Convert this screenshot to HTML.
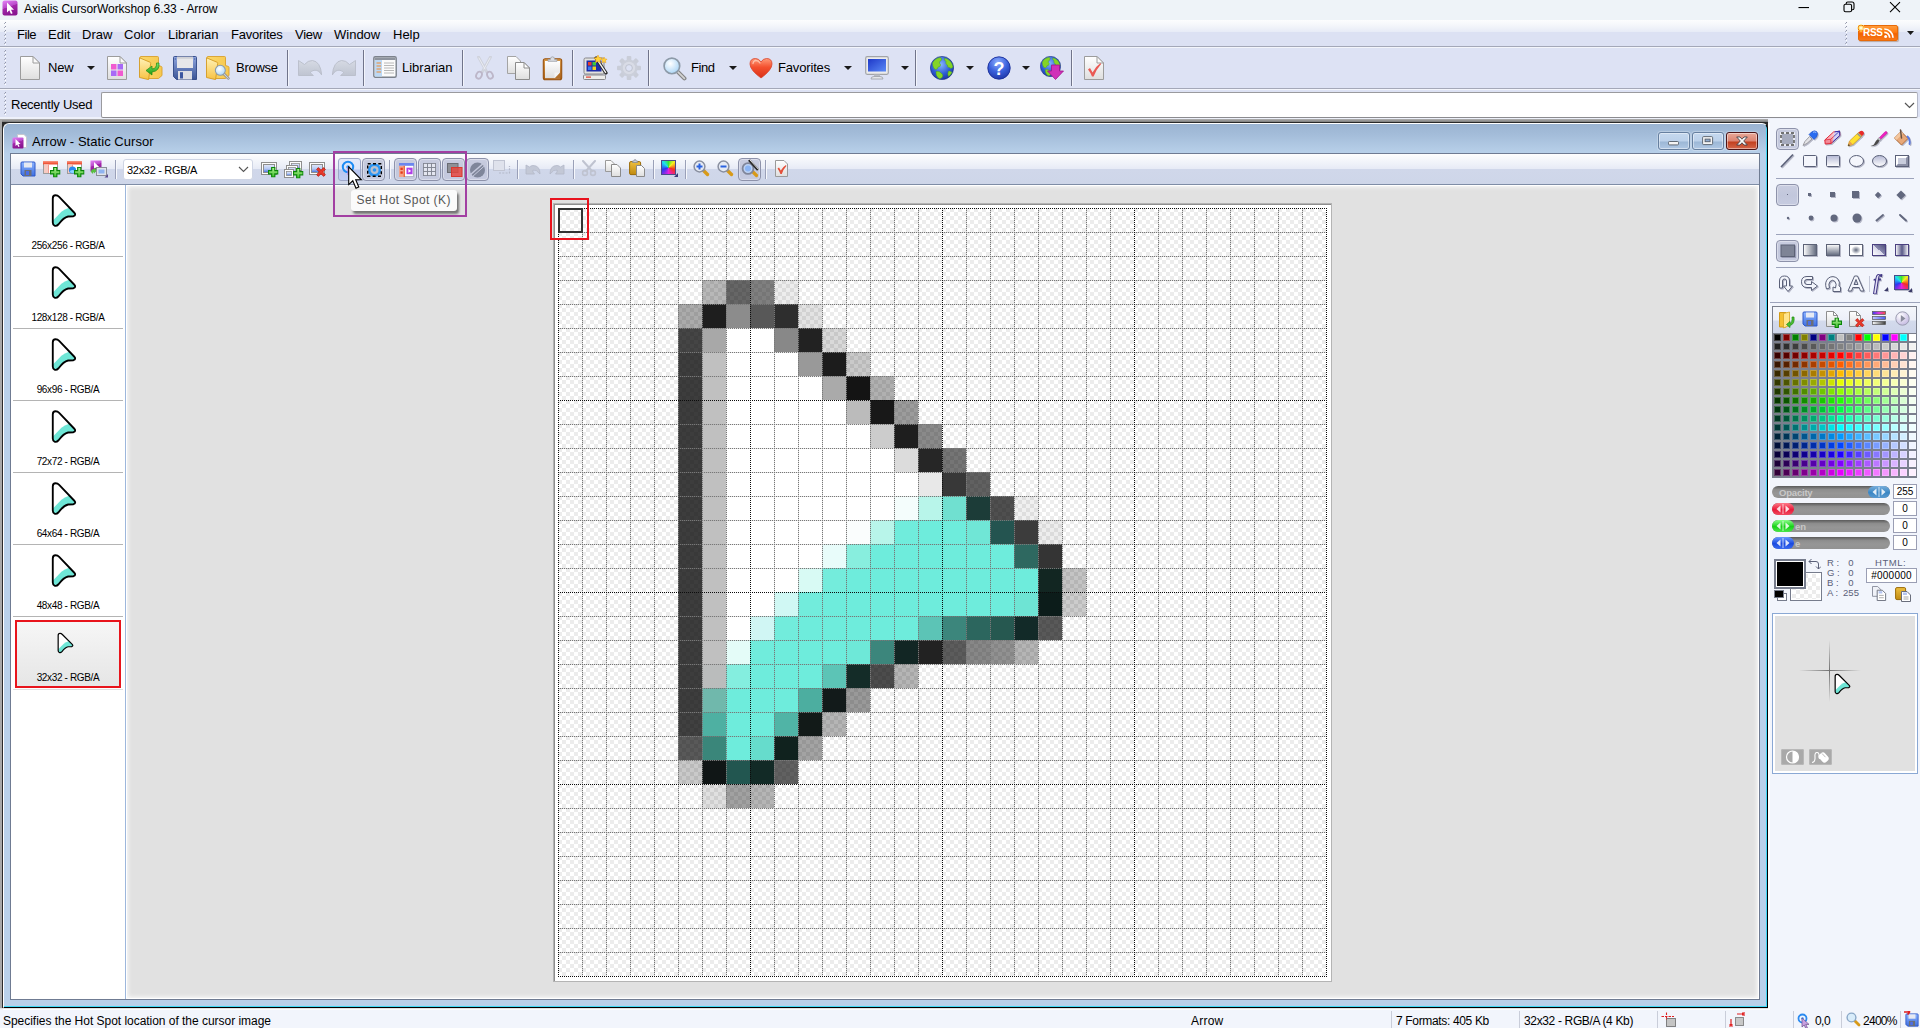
<!DOCTYPE html><html><head><meta charset="utf-8"><title>Axialis CursorWorkshop 6.33 - Arrow</title>
<style>
html,body{margin:0;padding:0}
body{width:1920px;height:1028px;position:relative;overflow:hidden;background:#eef1fa;
 font-family:"Liberation Sans",sans-serif;font-size:12px;color:#000}
div,span.t,svg{position:absolute;box-sizing:border-box}
span.t{white-space:nowrap;line-height:16px;display:block}
.sep{width:1px;background:#70748a}
.sep:after{content:"";position:absolute;left:1px;top:0;width:1px;height:100%;background:#f2f4fb}
.tb{border:1px solid #8d92aa;border-radius:4px;background:linear-gradient(#c9cde0,#c2c7dc 50%,#c6cbe0);box-shadow:inset 0 0 0 1px rgba(255,255,255,.35)}
.vb{border:1px solid #9a9eb4;background:#fff;font-size:10px;text-align:center;line-height:13px;color:#000}
.sl{border-radius:6px;background:linear-gradient(#5a5a5a,#8e8e8e 30%,#969696 60%,#929292);height:12px}
.hd{border-radius:6px;height:12px;width:22px}
</style></head><body>
<svg width="0" height="0" style="left:0;top:0"><defs>
<linearGradient id="gpage" x1="0" y1="0" x2="0" y2="1"><stop offset="0" stop-color="#ffffff"/><stop offset="1" stop-color="#dedede"/></linearGradient>
<linearGradient id="gfold" x1="0" y1="0" x2="0" y2="1"><stop offset="0" stop-color="#fff2b8"/><stop offset="1" stop-color="#f7c243"/></linearGradient>
<linearGradient id="gfold2" x1="0" y1="0" x2="1" y2="0"><stop offset="0" stop-color="#fcd868"/><stop offset="1" stop-color="#f6c850"/></linearGradient>
<linearGradient id="gflop" x1="0" y1="0" x2="0" y2="1"><stop offset="0" stop-color="#8ea4de"/><stop offset="1" stop-color="#3a5496"/></linearGradient>
<linearGradient id="gflop2" x1="0" y1="0" x2="0" y2="1"><stop offset="0" stop-color="#8db4ff"/><stop offset="1" stop-color="#3f6fe0"/></linearGradient>
<linearGradient id="ggray" x1="0" y1="0" x2="0" y2="1"><stop offset="0" stop-color="#d6dae4"/><stop offset="1" stop-color="#bfc4d1"/></linearGradient>
<linearGradient id="ggrn" x1="0" y1="0" x2="0" y2="1"><stop offset="0" stop-color="#7be36a"/><stop offset="1" stop-color="#1c9a10"/></linearGradient>
<radialGradient id="glens" cx=".4" cy=".35" r=".7"><stop offset="0" stop-color="#ffffff"/><stop offset="1" stop-color="#a8d4f6"/></radialGradient>
<radialGradient id="gglobe" cx=".45" cy=".35" r=".75"><stop offset="0" stop-color="#86b6ff"/><stop offset=".55" stop-color="#2f5cd4"/><stop offset="1" stop-color="#162a92"/></radialGradient>
<radialGradient id="ghelp" cx=".45" cy=".25" r=".85"><stop offset="0" stop-color="#8fb0ff"/><stop offset=".5" stop-color="#3a60dc"/><stop offset="1" stop-color="#1a2e9c"/></radialGradient>
<linearGradient id="gheart" x1="0" y1="0" x2="0" y2="1"><stop offset="0" stop-color="#ff9a78"/><stop offset=".45" stop-color="#f4502e"/><stop offset="1" stop-color="#d83018"/></linearGradient>
<linearGradient id="gmon" x1="0" y1="0" x2="1" y2="1"><stop offset="0" stop-color="#1e38c8"/><stop offset="1" stop-color="#5b8af6"/></linearGradient>
<linearGradient id="gclip" x1="0" y1="0" x2="0" y2="1"><stop offset="0" stop-color="#d89a4a"/><stop offset="1" stop-color="#a85e14"/></linearGradient>
<linearGradient id="gclip2" x1="0" y1="0" x2="0" y2="1"><stop offset="0" stop-color="#eec040"/><stop offset="1" stop-color="#c08a10"/></linearGradient>
<linearGradient id="gtool" x1="0" y1="0" x2="0" y2="1"><stop offset="0" stop-color="#ffffff"/><stop offset="1" stop-color="#b4b8d4"/></linearGradient>
<linearGradient id="ggrh" x1="0" y1="0" x2="1" y2="0"><stop offset="0" stop-color="#ffffff"/><stop offset="1" stop-color="#60687c"/></linearGradient>
<linearGradient id="ggrv" x1="0" y1="0" x2="0" y2="1"><stop offset="0" stop-color="#ffffff"/><stop offset="1" stop-color="#60687c"/></linearGradient>
<radialGradient id="ggrr"><stop offset="0" stop-color="#60687c"/><stop offset=".75" stop-color="#ffffff"/></radialGradient>
<linearGradient id="ggrd" x1="1" y1="0" x2="0" y2="1"><stop offset="0" stop-color="#4a4a78"/><stop offset=".5" stop-color="#8a8ab0"/><stop offset=".5" stop-color="#d8d8ea"/><stop offset="1" stop-color="#ffffff"/></linearGradient>
<linearGradient id="ggrm" x1="0" y1="0" x2="1" y2="0"><stop offset="0" stop-color="#ffffff"/><stop offset=".5" stop-color="#5a5a88"/><stop offset="1" stop-color="#ffffff"/></linearGradient>
<linearGradient id="gplus" x1="0" y1="0" x2="0" y2="1"><stop offset="0" stop-color="#b6f29a"/><stop offset="1" stop-color="#3fc028"/></linearGradient>
<linearGradient id="gpurp" x1="0" y1="0" x2=".35" y2="1"><stop offset="0" stop-color="#e686f8"/><stop offset=".5" stop-color="#b848c8"/><stop offset=".52" stop-color="#a428ac"/><stop offset="1" stop-color="#8a1690"/></linearGradient>
<linearGradient id="gred" x1="0" y1="0" x2="0" y2="1"><stop offset="0" stop-color="#f4705c"/><stop offset="1" stop-color="#e03820"/></linearGradient>
<symbol id="arw" viewBox="4.5 2.5 17.5 22.5" overflow="visible" preserveAspectRatio="none">
<clipPath id="arwc"><path d="M5.7,6 Q5.7,4 7.6,4 Q9,4 10,5 L20.2,15.2 Q21.6,16.6 19.6,17.4 L16,17.6 Q13,18.2 9.6,22.6 Q8.2,24 6.9,23.5 Q5.7,23 5.7,21.5 Z"/></clipPath>
<path d="M5.7,6 Q5.7,4 7.6,4 Q9,4 10,5 L20.2,15.2 Q21.6,16.6 19.6,17.4 L16,17.6 Q13,18.2 9.6,22.6 Q8.2,24 6.9,23.5 Q5.7,23 5.7,21.5 Z" fill="#fff"/>
<path clip-path="url(#arwc)" d="M5,21 L11.5,14.5 Q13.5,13 17,11.8 L24,11.8 V26 H4 Z" fill="#6ee6d6"/>
<path d="M5.7,6 Q5.7,4 7.6,4 Q9,4 10,5 L20.2,15.2 Q21.6,16.6 19.6,17.4 L16,17.6 Q13,18.2 9.6,22.6 Q8.2,24 6.9,23.5 Q5.7,23 5.7,21.5 Z" fill="none" stroke="#000" stroke-width="1.25" stroke-linejoin="round"/>
</symbol>
<symbol id="plus" viewBox="0 0 10 10"><path d="M3.5,.5 H6.5 V3.5 H9.5 V6.5 H6.5 V9.5 H3.5 V6.5 H.5 V3.5 H3.5 Z" fill="url(#gplus)" stroke="#0a8608" stroke-width="1.100"/></symbol>
<symbol id="xred" viewBox="0 0 10 10"><path d="M1,2.6 L2.6,1 L5,3.4 L7.4,1 L9,2.6 L6.6,5 L9,7.4 L7.4,9 L5,6.6 L2.6,9 L1,7.4 L3.4,5 Z" fill="#e8382a" stroke="#b81a10" stroke-width=".7"/></symbol>
<symbol id="floppy" viewBox="0 0 24 24"><path d="M.5,1.500 Q.5,.5 1.500,.5 H22.500 Q23.500,.5 23.500,1.500 V23.500 H3.500 L.5,20.500 Z" fill="url(#gflop)" stroke="#2f4684" stroke-width=".9"/><rect x="4" y=".8" width="16" height="11.200" fill="#e7e7ea"/><rect x="4" y=".8" width="16" height="2" fill="#cfd0d6"/><rect x="5" y="15" width="14" height="8.500" fill="#dcdde4"/><rect x="7" y="16.200" width="3" height="6.300" fill="#3a55a0"/><rect x="1.800" y="2.500" width="1" height="1" fill="#2f4684"/><rect x="21.200" y="2.500" width="1" height="1" fill="#2f4684"/></symbol>
<symbol id="floppyb" viewBox="0 0 16 16"><path d="M1,2 Q1,1 2,1 H14 Q15,1 15,2 V15 H3 L1,13 Z" fill="url(#gflop2)" stroke="#2f58c8" stroke-width="1"/><rect x="4" y="1.5" width="8" height="5" fill="#e6e9f2"/><rect x="4.5" y="9" width="7" height="6" fill="#6a6e78"/><rect x="6" y="10" width="3" height="4" fill="#4a6ee8"/></symbol>
<symbol id="page" viewBox="0 0 20 24"><path d="M.5,.5 H13 L19.5,7 V23.5 H.5 Z" fill="url(#gpage)" stroke="#9c9c9c"/><path d="M13,.5 V7 H19.5 Z" fill="#fafafa" stroke="#9c9c9c" stroke-linejoin="round"/></symbol>
<symbol id="spage" viewBox="0 0 16 16"><path d="M2.5,.5 H9.5 L13.5,4.5 V15.5 H2.5 Z" fill="url(#gpage)" stroke="#8e8e8e"/><path d="M9.5,.5 V4.5 H13.5 Z" fill="#fff" stroke="#8e8e8e" stroke-linejoin="round"/></symbol>
<symbol id="folder" viewBox="0 0 24 24"><path d="M1,1.5 Q1,.5 2,.5 H18.500 Q19.500,.5 19.500,1.500 V9.500 L22.500,10.500 Q23,10.800 23,11.500 V19.500 L19.500,22.500 H9 Z" fill="url(#gfold2)" stroke="#d9a02c" stroke-width=".9"/><path d="M.5,1.800 L11.200,6.300 Q11.800,6.600 11.700,7.300 L9.600,23.600 L.5,21.500 Z" fill="url(#gfold)" stroke="#d49a20" stroke-width=".9"/></symbol>
<symbol id="lens" viewBox="0 0 24 24"><path d="M15,15 L21.500,21.500" stroke="#868686" stroke-width="4" stroke-linecap="round"/><path d="M15,15 L21.500,21.500" stroke="#d4d4d4" stroke-width="1.600" stroke-linecap="round"/><circle cx="9.5" cy="9.5" r="7.5" fill="url(#glens)" stroke="#8d9aa8" stroke-width="1.6"/></symbol>
<symbol id="globe" viewBox="0 0 24 24"><circle cx="12" cy="12" r="11.600" fill="url(#gglobe)" stroke="#1a2c7a" stroke-width=".6"/><path d="M2.500,7 Q5,2 10.500,1.500 Q12.500,3 11,4.800 Q9,5.200 9.500,7.200 Q11.500,8.500 10,10.500 Q7.500,10.500 7.500,12.500 Q6,14.500 4,12.500 Q2.500,10 2.500,7Z M6,15.500 Q9.500,14.500 11,17 Q13.500,18.500 12.500,21 Q11,23 9,22.600 Q5.500,20 6,15.500Z M14.500,2 Q18,2.500 20.500,5.500 Q22.500,8 23,11 Q21,13.500 19.500,11.500 Q17,11.500 17.500,9 Q15,8 16,5.500 Q14,4.500 14.500,2Z M18.500,15 Q21,14.500 22,16.500 Q20.500,19.500 18.500,20.500 Q17,18 18.500,15Z" fill="#84d426" stroke="#3f9a14" stroke-width=".4"/></symbol>
</defs></svg>
<div style="left:0px;top:0px;width:1920px;height:20px;background:#eef3f8"></div>
<svg style="left:2px;top:0px" width="16" height="16" viewBox="0 0 16 16" ><rect x=".5" y=".5" width="15" height="15" rx="2" fill="url(#gpurp)"/><path d="M5,2.5 V12.5 L7.3,10.3 L9,14 L10.6,13.3 L9,9.7 H12 Z" fill="#fff"/></svg>
<span class="t" style="left:24px;top:1px;font-size:12px;color:#000;letter-spacing:-0.07px;line-height:17px">Axialis CursorWorkshop 6.33 - Arrow</span>
<svg style="left:1798px;top:7px" width="12" height="2" viewBox="0 0 12 2" ><rect x="0.5" y="0" width="10.5" height="1.1" fill="#000"/></svg><svg style="left:1843px;top:1px" width="12" height="12" viewBox="0 0 12 12" ><rect x="1" y="3.2" width="7.6" height="7.6" rx="1.6" fill="none" stroke="#000" stroke-width="1.1"/><path d="M3.2,3 V2.6 Q3.2,1 4.8,1 H9 Q11,1 11,3 V7.2 Q11,8.8 9.4,8.8 H9" fill="none" stroke="#000" stroke-width="1.1"/></svg><svg style="left:1889px;top:1px" width="12" height="12" viewBox="0 0 12 12" ><path d="M1,1.2 L11,11.2 M11,1.2 L1,11.2" stroke="#000" stroke-width="1.1" fill="none"/></svg>
<div style="left:0px;top:20px;width:1920px;height:27px;background:linear-gradient(#fcfdfe 0,#f5f7fb 5px,#e8ecf7 11.5px,#dce1f3 12px,#dce1f3 100%)"></div>
<div style="left:0px;top:46px;width:1920px;height:1px;background:#a4a8b8"></div>
<div style="left:0px;top:47px;width:1920px;height:1px;background:#f3f5fb"></div>
<div style="left:5px;top:22px;width:1px;height:24px;background:repeating-linear-gradient(#8f93a6 0,#8f93a6 1px,transparent 1px,transparent 4px)"></div><div style="left:4px;top:23px;width:1px;height:24px;background:repeating-linear-gradient(#a9adbd 0,#a9adbd 1px,transparent 1px,transparent 4px)"></div><div style="left:5px;top:24px;width:1px;height:24px;background:repeating-linear-gradient(#fff 0,#fff 1px,transparent 1px,transparent 4px)"></div>
<span class="t" style="left:17px;top:27px;font-size:13px;color:#000;letter-spacing:-0.45px">File</span>
<span class="t" style="left:48px;top:27px;font-size:13px;color:#000;letter-spacing:0px">Edit</span>
<span class="t" style="left:82px;top:27px;font-size:13px;color:#000;letter-spacing:0px">Draw</span>
<span class="t" style="left:124px;top:27px;font-size:13px;color:#000;letter-spacing:0px">Color</span>
<span class="t" style="left:168px;top:27px;font-size:13px;color:#000;letter-spacing:0px">Librarian</span>
<span class="t" style="left:231px;top:27px;font-size:13px;color:#000;letter-spacing:-0.2px">Favorites</span>
<span class="t" style="left:295px;top:27px;font-size:13px;color:#000;letter-spacing:-0.3px">View</span>
<span class="t" style="left:334px;top:27px;font-size:13px;color:#000;letter-spacing:0px">Window</span>
<span class="t" style="left:393px;top:27px;font-size:13px;color:#000;letter-spacing:0px">Help</span>
<div style="left:1846px;top:22px;width:1px;height:24px;background:repeating-linear-gradient(#8f93a6 0,#8f93a6 1px,transparent 1px,transparent 4px)"></div><div style="left:1845px;top:23px;width:1px;height:24px;background:repeating-linear-gradient(#a9adbd 0,#a9adbd 1px,transparent 1px,transparent 4px)"></div><div style="left:1846px;top:24px;width:1px;height:24px;background:repeating-linear-gradient(#fff 0,#fff 1px,transparent 1px,transparent 4px)"></div>
<div style="left:1858px;top:25px;width:40px;height:16px;border-radius:2px;border:1px solid #e86a08;background:linear-gradient(#ff9a3a,#ff7a10 45%,#f26200 55%,#f87818);box-shadow:1px 1px 1px rgba(120,60,0,.35)"><span class="t" style="left:4px;top:0;font-size:10px;font-weight:bold;color:#fff;line-height:14px;letter-spacing:-.3px">RSS</span></div><svg style="left:1884px;top:28px" width="10" height="10" viewBox="0 0 10 10" ><circle cx="1.6" cy="8.4" r="1.5" fill="#fff"/><path d="M0.3,4.3 A5.4,5.4 0 0 1 5.7,9.7" fill="none" stroke="#fff" stroke-width="1.7"/><path d="M0.3,1 A8.7,8.7 0 0 1 9,9.7" fill="none" stroke="#fff" stroke-width="1.7"/></svg><svg style="left:1856.5px;top:24px" width="8" height="8" viewBox="0 0 9 9" ><path d="M4.5,0 V9 M0,4.5 H9 M1.3,1.3 L7.7,7.7 M7.7,1.3 L1.3,7.7" stroke="#ffe45a" stroke-width="1.1"/><circle cx="4.5" cy="4.5" r="2" fill="#fffbd0"/></svg>
<svg style="left:1907px;top:31px" width="7" height="4" viewBox="0 0 7 4" ><path d="M0,0 H7 L3.5,4 Z" fill="#1a1a1a"/></svg>
<div style="left:0px;top:48px;width:1920px;height:40px;background:#dde2f4"></div>
<div style="left:0px;top:88px;width:1920px;height:1px;background:#a4a8b8"></div>
<div style="left:0px;top:89px;width:1920px;height:1px;background:#f3f5fb"></div>
<div style="left:5px;top:50px;width:1px;height:36px;background:repeating-linear-gradient(#8f93a6 0,#8f93a6 1px,transparent 1px,transparent 4px)"></div><div style="left:4px;top:51px;width:1px;height:36px;background:repeating-linear-gradient(#a9adbd 0,#a9adbd 1px,transparent 1px,transparent 4px)"></div><div style="left:5px;top:52px;width:1px;height:36px;background:repeating-linear-gradient(#fff 0,#fff 1px,transparent 1px,transparent 4px)"></div>
<svg style="left:20px;top:56px" width="20" height="24" viewBox="0 0 20 24" ><use href="#page" width="20" height="24"/></svg><span class="t" style="left:48px;top:60px;font-size:13px;color:#000;letter-spacing:-0.24px">New</span><svg style="left:87px;top:66px" width="8" height="4" viewBox="0 0 8 4" ><path d="M0,0 H8 L4.0,4 Z" fill="#1a1a1a"/></svg><svg style="left:107px;top:56px" width="20" height="24" viewBox="0 0 20 24" ><use href="#page" width="20" height="24"/><rect x="4" y="8" width="5.5" height="5.5" fill="#f05ad0"/><rect x="10.5" y="8" width="5.5" height="5.5" fill="#a86af6"/><rect x="4" y="14.5" width="5.5" height="5.5" fill="#a86af6"/><rect x="10.5" y="14.5" width="5.5" height="5.5" fill="#f05ad0"/></svg><svg style="left:139px;top:56px" width="24" height="24" viewBox="0 0 24 24" ><use href="#folder" width="24" height="24"/><path d="M20,7 Q21,15 13,16 V19 L7,14.5 L13,10 V13 Q18,12.5 17.5,7 Z" fill="url(#ggrn)" stroke="#1f8a12" stroke-width=".7"/></svg><svg style="left:173px;top:56px" width="24" height="24" viewBox="0 0 24 24" ><use href="#floppy" width="24" height="24"/></svg><svg style="left:206px;top:56px" width="24" height="24" viewBox="0 0 24 24" ><use href="#folder" width="24" height="24"/><use href="#lens" x="8" y="8" width="16" height="16"/></svg><span class="t" style="left:236px;top:60px;font-size:13px;color:#000;letter-spacing:-0.28px">Browse</span><div class="sep" style="left:287px;top:50px;height:36px"></div><svg style="left:298px;top:59.5px" width="24" height="16" viewBox="0 0 24 16" ><path d="M.5,.5 L6.500,4.500 Q10,.3 14.500,.5 Q22.500,1.500 23.700,15 Q20.500,9.500 16,10.300 Q13.500,10.800 12.200,12.700 L15.400,15.500 H.5 Z" fill="url(#ggray)" stroke="#b9bdc9" stroke-width=".9" stroke-linejoin="round"/></svg><svg style="left:332px;top:59.5px" width="24" height="16" viewBox="0 0 24 16" ><g transform="translate(24,0) scale(-1,1)"><path d="M.5,.5 L6.500,4.500 Q10,.3 14.500,.5 Q22.500,1.500 23.700,15 Q20.500,9.500 16,10.300 Q13.500,10.800 12.200,12.700 L15.400,15.500 H.5 Z" fill="url(#ggray)" stroke="#b9bdc9" stroke-width=".9" stroke-linejoin="round"/></g></svg><div class="sep" style="left:363px;top:50px;height:36px"></div><svg style="left:373px;top:55px" width="24" height="24" viewBox="0 0 24 24" ><rect x=".8" y="1.8" width="22.4" height="20.4" rx="1.5" fill="#fbfbfb" stroke="#7c828c" stroke-width="1.4"/><rect x="1.5" y="2.5" width="21" height="2.5" fill="#8e949e"/><rect x="2" y="5" width="7" height="16.5" fill="#bcd8f4"/><path d="M3.5,8H8M3.5,11H8M3.5,14H8M3.5,17H8" stroke="#f08a30" stroke-width="1.2"/><path d="M11,8H21M11,10.5H21M11,13H21M11,15.5H21M11,18H21" stroke="#b8b8b8" stroke-width="1"/></svg><span class="t" style="left:402px;top:60px;font-size:13px;color:#000;">Librarian</span><div class="sep" style="left:462px;top:50px;height:36px"></div><svg style="left:474px;top:56px" width="22" height="24" viewBox="0 0 22 24" ><path d="M4.500,1 L12.800,16 M16.500,1 L8.200,16" stroke="#cfd2dc" stroke-width="2.800" stroke-linecap="round"/><path d="M5,2 L11,13 M16,2 L10,13" stroke="#eceef4" stroke-width=".9" stroke-linecap="round"/><ellipse cx="5" cy="19.200" rx="2.700" ry="3.600" transform="rotate(25 5 19.200)" fill="none" stroke="#bdb7c9" stroke-width="1.900"/><ellipse cx="16" cy="19.200" rx="2.700" ry="3.600" transform="rotate(-25 16 19.200)" fill="none" stroke="#bdb7c9" stroke-width="1.900"/></svg><svg style="left:507px;top:56px" width="24" height="24" viewBox="0 0 24 24" ><path d="M.5,.5 H9 L13.5,5 V17.5 H.5 Z" fill="url(#gpage)" stroke="#a4a4a4"/><path d="M8.5,6.5 H17 L22.5,12 V23.5 H8.5 Z" fill="url(#gpage)" stroke="#8c8c8c"/><path d="M17,6.5 V12 H22.5 Z" fill="#fff" stroke="#8c8c8c" stroke-linejoin="round"/></svg><svg style="left:542px;top:55px" width="22" height="26" viewBox="0 0 22 26" ><rect x="1.300" y="3.800" width="18.400" height="21" rx="2" fill="url(#gclip)" stroke="#9a5410" stroke-width="1.100"/><path d="M3,6 H18 V23.200 H3 Z" fill="url(#gpage)"/><path d="M18,17.500 L12.500,23.200 H18 Z" fill="#b4722c"/><path d="M18,17.500 H12.500 V23.200 Z" fill="#f4f4f4"/><path d="M6,6.300 V4.600 H8.300 Q8.300,1.800 10.500,1.800 Q12.700,1.800 12.700,4.600 H15 V6.300 Z" fill="#dcdee4" stroke="#9a9ea6" stroke-width=".8"/></svg><div class="sep" style="left:572px;top:50px;height:36px"></div><svg style="left:583px;top:55px" width="25" height="26" viewBox="0 0 25 26" ><rect x="1" y="3" width="20" height="16" rx="1.5" fill="#e2e2de" stroke="#86868a"/><rect x="3.5" y="5.5" width="15" height="11" fill="#1c2ca8"/><rect x="5" y="7" width="3.5" height="3.5" fill="#e83a2a"/><rect x="9.5" y="7" width="3.5" height="3.5" fill="#3ac83a"/><rect x="5" y="11.5" width="3.5" height="3.5" fill="#3a7af0"/><rect x="9.5" y="11.5" width="3.5" height="3.5" fill="#f0d020"/><rect x="0.5" y="20" width="22" height="4.5" rx="1" fill="#ececea" stroke="#86868a"/><rect x="3" y="21.5" width="5" height="1.2" fill="#e04030"/><path d="M13,3 L23,18" stroke="#2a2a2a" stroke-width="3.2" stroke-linecap="round"/><path d="M13.4,3.4 L22.6,17.4" stroke="#f4f4f4" stroke-width="1.4" stroke-linecap="round"/><path d="M15,0 l1.2,2.6 2.8,.3 -2,2 .5,2.8 -2.5,-1.4 -2.5,1.4 .5,-2.8 -2,-2 2.8,-.3Z" fill="#ffd23a" stroke="#e89a10" stroke-width=".5"/><path d="M21,2 l.9,1.9 2.1,.3 -1.5,1.5 .4,2.1 -1.9,-1 -1.9,1 .4,-2.1 -1.5,-1.5 2.1,-.3Z" fill="#ffd23a" stroke="#e89a10" stroke-width=".5"/></svg><svg style="left:617px;top:56px" width="24" height="24" viewBox="0 0 24 24" ><g transform="translate(12,12)"><rect x="-2.3" y="-12" width="4.6" height="6" rx="1" fill="#c9cdd8" transform="rotate(0)"/><rect x="-2.3" y="-12" width="4.6" height="6" rx="1" fill="#c9cdd8" transform="rotate(45)"/><rect x="-2.3" y="-12" width="4.6" height="6" rx="1" fill="#c9cdd8" transform="rotate(90)"/><rect x="-2.3" y="-12" width="4.6" height="6" rx="1" fill="#c9cdd8" transform="rotate(135)"/><rect x="-2.3" y="-12" width="4.6" height="6" rx="1" fill="#c9cdd8" transform="rotate(180)"/><rect x="-2.3" y="-12" width="4.6" height="6" rx="1" fill="#c9cdd8" transform="rotate(225)"/><rect x="-2.3" y="-12" width="4.6" height="6" rx="1" fill="#c9cdd8" transform="rotate(270)"/><rect x="-2.3" y="-12" width="4.6" height="6" rx="1" fill="#c9cdd8" transform="rotate(315)"/><circle r="8.6" fill="#cbcfda"/><circle r="6.2" fill="#d9dce6"/><circle r="3.400" fill="#dde2f4" stroke="#bfc3cf" stroke-width="1"/></g></svg><div class="sep" style="left:648px;top:50px;height:36px"></div><svg style="left:662px;top:56px" width="25" height="25" viewBox="0 0 25 25" ><use href="#lens" width="25" height="25"/></svg><span class="t" style="left:691px;top:60px;font-size:13px;color:#000;letter-spacing:-0.45px">Find</span><svg style="left:729px;top:66px" width="8" height="4" viewBox="0 0 8 4" ><path d="M0,0 H8 L4.0,4 Z" fill="#1a1a1a"/></svg><svg style="left:749px;top:57px" width="24" height="22" viewBox="0 0 24 22" ><path d="M12,21 Q1,13 1,7 Q1,1.5 6.5,1.5 Q10,1.5 12,5 Q14,1.5 17.5,1.5 Q23,1.5 23,7 Q23,13 12,21 Z" fill="url(#gheart)" stroke="#d8442c" stroke-width=".8"/><path d="M4,6.5 Q4.5,3.5 7,3.5 Q9.5,3.5 11,6" fill="none" stroke="#ffd0bc" stroke-width="1.3" stroke-linecap="round" opacity=".8"/></svg><span class="t" style="left:778px;top:60px;font-size:13px;color:#000;letter-spacing:-0.16px">Favorites</span><svg style="left:844px;top:66px" width="8" height="4" viewBox="0 0 8 4" ><path d="M0,0 H8 L4.0,4 Z" fill="#1a1a1a"/></svg><svg style="left:865px;top:56px" width="24" height="24" viewBox="0 0 24 24" ><rect x=".7" y=".7" width="22.600" height="17.600" rx="1.500" fill="#ececec" stroke="#a2a4a8" stroke-width="1.200"/><rect x="3" y="3" width="18" height="12.5" fill="url(#gmon)"/><path d="M9,18.5 H15 V20.5 H9Z" fill="#b8bcc4"/><path d="M6,23 Q6,20.5 9,20.5 H15 Q18,20.5 18,23 Z" fill="#e4e6ea" stroke="#9a9ea6" stroke-width=".8"/></svg><svg style="left:901px;top:66px" width="8" height="4" viewBox="0 0 8 4" ><path d="M0,0 H8 L4.0,4 Z" fill="#1a1a1a"/></svg><div class="sep" style="left:915px;top:50px;height:36px"></div><svg style="left:930px;top:56px" width="24" height="24" viewBox="0 0 24 24" ><use href="#globe" width="24" height="24"/></svg><svg style="left:966px;top:66px" width="8" height="4" viewBox="0 0 8 4" ><path d="M0,0 H8 L4.0,4 Z" fill="#1a1a1a"/></svg><svg style="left:987px;top:56px" width="24" height="24" viewBox="0 0 24 24" ><circle cx="12" cy="12" r="11.2" fill="url(#ghelp)" stroke="#1a2e9a" stroke-width=".9"/><text x="12" y="18.5" text-anchor="middle" font-family="Liberation Sans,sans-serif" font-weight="bold" font-size="18" fill="#fff">?</text></svg><svg style="left:1022px;top:66px" width="8" height="4" viewBox="0 0 8 4" ><path d="M0,0 H8 L4.0,4 Z" fill="#1a1a1a"/></svg><svg style="left:1040px;top:56px" width="24" height="24" viewBox="0 0 24 24" ><use href="#globe" width="21" height="21"/><path d="M11.5,9 H19.5 V15 H23.5 L15.5,23.5 L7.5,15 H11.5 Z" fill="#d030b8" stroke="#a0148c" stroke-width=".8"/></svg><div class="sep" style="left:1071px;top:50px;height:36px"></div><svg style="left:1084px;top:56px" width="20" height="24" viewBox="0 0 20 24" ><use href="#page" width="20" height="24"/><path d="M4,13.500 L6,12 L8.600,16.500 Q11.500,10.500 16.500,7 L17,8.200 Q12.500,13 9.600,20.500 L8,20.500 Q6.500,16.500 4,13.500Z" fill="#ea5a54"/></svg>
<div style="left:0px;top:90px;width:1920px;height:27px;background:#dde2f4"></div>
<div style="left:5px;top:92px;width:1px;height:24px;background:repeating-linear-gradient(#8f93a6 0,#8f93a6 1px,transparent 1px,transparent 4px)"></div><div style="left:4px;top:93px;width:1px;height:24px;background:repeating-linear-gradient(#a9adbd 0,#a9adbd 1px,transparent 1px,transparent 4px)"></div><div style="left:5px;top:94px;width:1px;height:24px;background:repeating-linear-gradient(#fff 0,#fff 1px,transparent 1px,transparent 4px)"></div>
<span class="t" style="left:11px;top:97px;font-size:13px;color:#000;letter-spacing:-0.25px">Recently Used</span>
<div style="left:101px;top:92px;width:1817px;height:26px;background:#fff;border:1px solid #9a9a9e;border-right-color:#b4b8c8;border-bottom-color:#8c8c90;border-radius:2px"></div>
<svg style="left:1904px;top:102px" width="11" height="7"><path d="M1 1 L5.5 5.5 L10 1" fill="none" stroke="#555" stroke-width="1.2"/></svg>
<div style="left:0px;top:119px;width:1768px;height:3px;background:linear-gradient(#b2b2b2,#7c7c7c)"></div>
<div style="left:0px;top:122px;width:1768px;height:1px;background:#2a2a2a"></div>
<div style="left:0px;top:119px;width:2px;height:889px;background:#a8a8a8"></div>
<div style="left:2px;top:122px;width:1px;height:886px;background:#2a2a2a"></div>
<div style="left:3px;top:123px;width:1767px;height:887px;background:#fff"></div>
<div style="left:1770px;top:119px;width:150px;height:891px;background:#f2f5fc"></div>
<div class="tb" style="left:1776px;top:128px;width:23px;height:22px"></div><svg style="left:1780px;top:132px" width="15" height="14" viewBox="0 0 15 14" ><rect x="1" y="1" width="13" height="12" fill="#a6abbd"/><rect x="1" y="1" width="13" height="12" fill="none" stroke="#fff" stroke-width="1.4"/><rect x="1" y="1" width="13" height="12" fill="none" stroke="#4a4a4a" stroke-width="1.4" stroke-dasharray="3 2"/></svg><svg style="left:1802px;top:130px" width="17" height="17" viewBox="0 0 17 17" filter="drop-shadow(1px 1px 0.6px rgba(70,70,100,.35))"><path d="M1,15.5 Q1.5,12 7.5,6.5 L10,9 Q4.5,14.5 1,15.5Z" fill="#e4e4e8" stroke="#8a8a90" stroke-width=".8"/><path d="M7,4.5 L12,9.5 L14.5,7 Q16.5,3.5 14.5,1.5 Q12.5,0 9.5,2Z" fill="#2a6cf0" stroke="#1a4ac0" stroke-width=".6"/><path d="M11,2.2 Q13,1.4 14.3,2.6" stroke="#a8c8ff" stroke-width="1" fill="none"/></svg><svg style="left:1824px;top:130px" width="18" height="17" viewBox="0 0 18 17" filter="drop-shadow(1px 1px 0.6px rgba(70,70,100,.35))"><defs><clipPath id="erc"><path d="M8,16 L11,0 H18 V16Z"/></clipPath><linearGradient id="erg" x1="0" y1="0" x2="0" y2="1"><stop offset="0" stop-color="#fde0e4"/><stop offset="1" stop-color="#f07888"/></linearGradient></defs><path d="M.8,10 L9.500,2 L15.500,1.200 L15.800,5.500 L7,13.500 L1.200,14Z" fill="url(#erg)" stroke="#e02838" stroke-width="1"/><path d="M.8,10 L6.700,9.300 L15.500,1.200" fill="none" stroke="#e02838" stroke-width=".8"/><path d="M6.700,9.300 L7,13.500" stroke="#e02838" stroke-width=".8"/><g clip-path="url(#erc)"><path d="M.8,10 L9.500,2 L15.500,1.200 L15.800,5.500 L7,13.500 L1.200,14Z" fill="#d4d0f4" stroke="#3030b0" stroke-width="1"/><path d="M.8,10 L6.700,9.300 L15.500,1.200" fill="none" stroke="#3030b0" stroke-width=".8"/></g></svg><svg style="left:1847px;top:130px" width="18" height="17" viewBox="0 0 18 17" filter="drop-shadow(1px 1px 0.6px rgba(70,70,100,.35))"><path d="M1,16 L2.5,11 L11.5,2.5 L15,6 L6,14.5Z" fill="#ffe030" stroke="#c89a10" stroke-width=".7"/><path d="M1,16 L2.5,11 L6,14.5Z" fill="#e8a050"/><path d="M1,16 L1.600,14 L3,15.400Z" fill="#333"/><path d="M11.500,2.500 L13,1.200 Q15,0 16.400,1.800 Q17.600,3.600 16.300,4.800 L15,6Z" fill="#e82a2a"/><path d="M10.500,3.500 L14,7" stroke="#909098" stroke-width="1.6"/></svg><svg style="left:1870px;top:130px" width="18" height="17" viewBox="0 0 18 17" filter="drop-shadow(1px 1px 0.6px rgba(70,70,100,.35))"><path d="M9,8 L15,1.800 Q16.400,1 17,2 Q17.500,3 16.500,4 L10.500,9.500Z" fill="#f020c0" stroke="#c0109a" stroke-width=".5"/><path d="M7.500,9 L9.300,7.600 L10.800,9.200 L9.500,11Z" fill="#c8c8cc" stroke="#777" stroke-width=".5"/><path d="M0.500,16 Q4,15.500 5,12.500 Q6,10 8,9.300 L9.300,10.700 Q8.500,13.500 6,15 Q3.500,16.500 0.500,16Z" fill="#4a4a4a"/></svg><svg style="left:1893px;top:129px" width="18" height="18" viewBox="0 0 18 18" filter="drop-shadow(1px 1px 0.6px rgba(70,70,100,.35))"><path d="M1.500,9 L8,2.500 L15,9.500 L8.500,16Z" fill="#e8a878" stroke="#b8703a" stroke-width="1"/><path d="M1.500,9 L8,2.500 L10,4.500 L3.500,11Z" fill="#f4c8a0"/><path d="M7.500,1 L8.500,9" stroke="#6a5040" stroke-width="1.500" stroke-linecap="round"/><path d="M14.500,7.500 Q17.500,10 16.500,15" fill="none" stroke="#5a78e0" stroke-width="1.800" stroke-linecap="round"/></svg><svg style="left:1779px;top:152px" width="18" height="18" viewBox="0 0 18 18" filter="drop-shadow(1px 1px 0.6px rgba(70,70,100,.35))"><path d="M2,15 L14,2.5" stroke="#5a6078" stroke-width="1.700"/></svg><svg style="left:1802px;top:154px" width="17" height="15" viewBox="0 0 17 15" filter="drop-shadow(1px 1px 0.6px rgba(70,70,100,.35))"><rect x="1.500" y="1.500" width="13" height="11" rx="1" fill="#f4f6fc" stroke="#5a6078" stroke-width="1"/></svg><svg style="left:1825px;top:154px" width="17" height="15" viewBox="0 0 17 15" filter="drop-shadow(1px 1px 0.6px rgba(70,70,100,.35))"><rect x="1.500" y="1.500" width="13" height="11" rx="1" fill="url(#gtool)" stroke="#5a6078" stroke-width="1" transform="rotate(180 8 7)"/></svg><svg style="left:1848px;top:154px" width="18" height="15" viewBox="0 0 18 15" filter="drop-shadow(1px 1px 0.6px rgba(70,70,100,.35))"><ellipse cx="8.500" cy="7" rx="7" ry="5.500" fill="#f4f6fc" stroke="#5a6078" stroke-width="1"/></svg><svg style="left:1871px;top:154px" width="18" height="15" viewBox="0 0 18 15" filter="drop-shadow(1px 1px 0.6px rgba(70,70,100,.35))"><ellipse cx="8.500" cy="7" rx="7" ry="5.500" fill="url(#gtool)" stroke="#5a6078" stroke-width="1" transform="rotate(180 8.500 7)"/></svg><svg style="left:1894px;top:154px" width="17" height="15" viewBox="0 0 17 15" filter="drop-shadow(1px 1px 0.6px rgba(70,70,100,.35))"><rect x="1.500" y="1.500" width="13" height="11" fill="#c8ccdc" stroke="#5a6078" stroke-width="1"/><path d="M1.500,1.500 H14.500 L12,4 H4 V10 L1.500,12.500Z" fill="#fff"/><path d="M14.500,1.500 V12.500 H1.500 L4,10 H12 V4Z" fill="#8a8ea4"/><rect x="1.500" y="1.500" width="13" height="11" fill="none" stroke="#5a6078" stroke-width="1"/></svg><div style="left:1776px;top:178px;width:138px;height:1px;background:#9ca3bb"></div><div class="tb" style="left:1776px;top:184px;width:23px;height:22px"></div><svg style="left:1786px;top:193px" width="3" height="3" viewBox="0 0 3 3" ><rect x="1" y="1" width="1" height="1" fill="#62687e"/></svg><svg style="left:1807.5px;top:192.5px" width="5" height="5" viewBox="0 0 5 5" filter="drop-shadow(1px 1px 0.6px rgba(70,70,100,.35))"><rect width="3" height="3" fill="#62687e"/></svg><svg style="left:1829.5px;top:191.5px" width="7" height="7" viewBox="0 0 7 7" filter="drop-shadow(1px 1px 0.6px rgba(70,70,100,.35))"><rect width="5" height="5" fill="#62687e"/></svg><svg style="left:1851.5px;top:190.5px" width="9" height="9" viewBox="0 0 9 9" filter="drop-shadow(1px 1px 0.6px rgba(70,70,100,.35))"><rect width="7" height="7" fill="#62687e"/></svg><svg style="left:1872.0px;top:188.5px" width="12" height="12" viewBox="0 0 12 12" filter="drop-shadow(1px 1px 0.6px rgba(70,70,100,.35))"><path d="M6,2.8 L9.2,6 L6,9.2 L2.8,6Z" fill="#62687e"/></svg><svg style="left:1895.0px;top:188.5px" width="12" height="12" viewBox="0 0 12 12" filter="drop-shadow(1px 1px 0.6px rgba(70,70,100,.35))"><path d="M6,1.4000000000000004 L10.6,6 L6,10.6 L1.4000000000000004,6Z" fill="#62687e"/></svg><svg style="left:1781.5px;top:211.5px" width="13" height="13" viewBox="0 0 13 13" filter="drop-shadow(1px 1px 0.6px rgba(70,70,100,.35))"><circle cx="6" cy="6" r="1.2" fill="#62687e"/></svg><svg style="left:1804.5px;top:211.5px" width="13" height="13" viewBox="0 0 13 13" filter="drop-shadow(1px 1px 0.6px rgba(70,70,100,.35))"><circle cx="6" cy="6" r="2.4" fill="#62687e"/></svg><svg style="left:1827.5px;top:211.5px" width="13" height="13" viewBox="0 0 13 13" filter="drop-shadow(1px 1px 0.6px rgba(70,70,100,.35))"><circle cx="6" cy="6" r="3.5" fill="#62687e"/></svg><svg style="left:1850.5px;top:211.5px" width="13" height="13" viewBox="0 0 13 13" filter="drop-shadow(1px 1px 0.6px rgba(70,70,100,.35))"><circle cx="6" cy="6" r="4.5" fill="#62687e"/></svg><svg style="left:1873.5px;top:211.5px" width="13" height="13" viewBox="0 0 13 13" filter="drop-shadow(1px 1px 0.6px rgba(70,70,100,.35))"><path d="M2.500,8.500 L9,3" stroke="#62687e" stroke-width="1.900" stroke-linecap="round"/></svg><svg style="left:1896.5px;top:211.5px" width="13" height="13" viewBox="0 0 13 13" filter="drop-shadow(1px 1px 0.6px rgba(70,70,100,.35))"><path d="M3,3 L9,8.500" stroke="#62687e" stroke-width="1.900" stroke-linecap="round"/></svg><div style="left:1776px;top:234px;width:138px;height:1px;background:#9ca3bb"></div><div class="tb" style="left:1776px;top:240px;width:23px;height:22px"></div><svg style="left:1780px;top:244px" width="16" height="14" viewBox="0 0 16 14" filter="drop-shadow(1px 1px 0.6px rgba(70,70,100,.35))"><rect x="1" y="1" width="13.500" height="11.500" fill="#7e8496" stroke="#5c6276" stroke-width="1"/></svg><svg style="left:1802px;top:244px" width="17" height="15" viewBox="0 0 17 15" filter="drop-shadow(1px 1px 0.6px rgba(70,70,100,.35))"><rect x="1.500" y=".500" width="13" height="11" fill="url(#ggrh)" stroke="#5c6276" stroke-width="1"/></svg><svg style="left:1825px;top:244px" width="17" height="15" viewBox="0 0 17 15" filter="drop-shadow(1px 1px 0.6px rgba(70,70,100,.35))"><rect x="1.500" y=".500" width="13" height="11" fill="url(#ggrv)" stroke="#5c6276" stroke-width="1"/></svg><svg style="left:1848px;top:244px" width="17" height="15" viewBox="0 0 17 15" filter="drop-shadow(1px 1px 0.6px rgba(70,70,100,.35))"><rect x="1.500" y=".500" width="13" height="11" fill="url(#ggrr)" stroke="#5c6276" stroke-width="1"/></svg><svg style="left:1871px;top:244px" width="17" height="15" viewBox="0 0 17 15" filter="drop-shadow(1px 1px 0.6px rgba(70,70,100,.35))"><rect x="1.500" y=".500" width="13" height="11" fill="url(#ggrd)" stroke="#4a4080" stroke-width="1"/></svg><svg style="left:1894px;top:244px" width="17" height="15" viewBox="0 0 17 15" filter="drop-shadow(1px 1px 0.6px rgba(70,70,100,.35))"><rect x="1.500" y=".500" width="13" height="11" fill="url(#ggrm)" stroke="#4a4080" stroke-width="1"/></svg><div style="left:1776px;top:267px;width:138px;height:1px;background:#9ca3bb"></div><svg style="left:1778px;top:275px" width="18" height="18" viewBox="0 0 18 18" filter="drop-shadow(1px 1px 0.6px rgba(70,70,100,.35))"><path d="M1.500,13 V6 Q1.500,1 6.500,1 Q11.500,1 11.500,6 V11 H14.500 L10,16.500 L5.500,11 H8.500 V6 Q8.500,4 6.500,4 Q4.500,4 4.500,6 V13Z" fill="#f4f6fc" stroke="#5a6078" stroke-width="1" stroke-linejoin="round"/></svg><svg style="left:1800px;top:275px" width="19" height="18" viewBox="0 0 19 18" filter="drop-shadow(1px 1px 0.6px rgba(70,70,100,.35))"><path d="M12.500,1.500 H7 Q1.500,1.500 1.500,6.800 Q1.500,12.500 7,12.500 H11.500 V15.500 L17.500,11 L11.500,6.500 V9.500 H7 Q4.500,9.500 4.500,6.800 Q4.500,4.500 7,4.500 H12.500Z" fill="#f4f6fc" stroke="#5a6078" stroke-width="1" stroke-linejoin="round"/></svg><svg style="left:1824px;top:275px" width="18" height="18" viewBox="0 0 18 18" filter="drop-shadow(1px 1px 0.6px rgba(70,70,100,.35))"><path d="M2.500,14 Q0,7 4.500,3 Q9,0 13.500,3.500 Q16.500,7 15,11 L16.500,12 V16.500 H9 V12 L11.500,13 Q13,9 11,6.500 Q8.500,4 6,6.500 Q4,9 5.500,13Z" fill="#f4f6fc" stroke="#5a6078" stroke-width="1" stroke-linejoin="round"/></svg><svg style="left:1847px;top:275px" width="19" height="18" viewBox="0 0 19 18" filter="drop-shadow(1px 1px 0.6px rgba(70,70,100,.35))"><path d="M1,16 L7.500,1 H10.500 L17,16 H13.500 L12.200,12.500 H5.800 L4.500,16Z M7,9.500 H11 L9,4.500Z" fill="#f4f6fc" stroke="#5a6078" stroke-width="1" stroke-linejoin="round" fill-rule="evenodd"/></svg><div style="left:1869px;top:276px;width:1px;height:16px;background:#c4c8d8"></div><svg style="left:1872px;top:274px" width="20" height="20" viewBox="0 0 20 20" filter="drop-shadow(1px 1px 0.6px rgba(70,70,100,.35))"><text x="1.500" y="15" font-family="Liberation Serif,serif" font-style="italic" font-weight="bold" font-size="20" fill="#e4e0f6" stroke="#3f3684" stroke-width="1">f</text><path d="M16,13 V17 H12Z" fill="#3a3a68"/></svg><svg style="left:1894px;top:275px" width="20" height="20" viewBox="0 0 20 20" filter="drop-shadow(1px 1px 0.6px rgba(70,70,100,.35))"><foreignObject x="1" y="1" width="13" height="13"><div style="position:static;width:13px;height:13px;background:conic-gradient(from 0deg,#38e838,#f4f020 45deg,#f43020 110deg,#e420e0 180deg,#2838f0 250deg,#20e0f0 315deg,#38e838)"></div></foreignObject><rect x=".500" y=".500" width="14" height="14" fill="none" stroke="#4a4a8a"/><path d="M18,13 V17 H14Z" fill="#3a3a68"/></svg><div style="left:1770px;top:302px;width:150px;height:1px;background:#9ca3bb"></div><div style="left:1772px;top:306px;width:145px;height:172px;background:#7a7f8d"></div><div style="left:1773px;top:307px;width:143px;height:26px;background:linear-gradient(#f4f6fb 0,#eceff8 13px,#d3daec 14px,#cdd5e9 100%)"></div><svg style="left:1778px;top:311px" width="18" height="18" viewBox="0 0 18 18" ><path d="M1.500,1.500 H8 V16 H1.500Z" fill="#f4c030" stroke="#d09a18"/><path d="M5.500,2.500 L11.500,1 V14.500 L5.500,17Z" fill="#ffe48a" stroke="#d8a420" stroke-width=".8"/><path d="M16,6 Q17,13 12,14.500 V16.500 L8.500,13.500 L12,10.500 V12.500 Q14.500,11.500 14,6Z" fill="#48c030" stroke="#1f8a12" stroke-width=".7"/></svg><svg style="left:1802px;top:311px" width="17" height="17" viewBox="0 0 17 17" ><use href="#floppyb" width="16" height="16"/></svg><svg style="left:1825px;top:311px" width="18" height="18" viewBox="0 0 18 18" ><use href="#spage" width="16" height="16" x="-1"/><use href="#plus" x="6.500" y="6.500" width="10.500" height="10.500"/></svg><svg style="left:1848px;top:311px" width="18" height="18" viewBox="0 0 18 18" ><use href="#spage" width="16" height="16" x="-1"/><use href="#xred" x="6.500" y="6.500" width="10.500" height="10.500"/></svg><svg style="left:1872px;top:311px" width="15" height="15" viewBox="0 0 15 15" ><defs><linearGradient id="pg1"><stop offset="0" stop-color="#3a3af0"/><stop offset=".5" stop-color="#e03ae0"/><stop offset="1" stop-color="#f04a3a"/></linearGradient><linearGradient id="pg2"><stop offset="0" stop-color="#c0c8ff"/><stop offset="1" stop-color="#4a5af0"/></linearGradient><linearGradient id="pg3"><stop offset="0" stop-color="#ffffff"/><stop offset="1" stop-color="#3a3a3a"/></linearGradient></defs><rect x=".500" y=".500" width="13" height="3" fill="url(#pg1)" stroke="#555" stroke-width=".7"/><rect x=".500" y="5.500" width="13" height="3" fill="url(#pg2)" stroke="#555" stroke-width=".7"/><rect x=".500" y="10.500" width="13" height="3" fill="url(#pg3)" stroke="#555" stroke-width=".7"/></svg><svg style="left:1895px;top:311px" width="16" height="16" viewBox="0 0 16 16" ><defs><radialGradient id="pgp" cx=".35" cy=".3" r=".8"><stop offset="0" stop-color="#fff"/><stop offset="1" stop-color="#c0b4e0"/></radialGradient></defs><circle cx="7.500" cy="7.500" r="6.700" fill="url(#pgp)" stroke="#9a9cb0" stroke-width="1"/><path d="M5.800,4 L10.500,7.500 L5.800,11Z" fill="#8a8c9c"/></svg><svg style="left:1773px;top:333px" width="144" height="144" viewBox="0 0 144 144" shape-rendering="crispEdges"><rect x="1" y="1" width="7" height="7" fill="#000000"/><rect x="10" y="1" width="7" height="7" fill="#800000"/><rect x="19" y="1" width="7" height="7" fill="#008000"/><rect x="28" y="1" width="7" height="7" fill="#808000"/><rect x="37" y="1" width="7" height="7" fill="#000080"/><rect x="46" y="1" width="7" height="7" fill="#800080"/><rect x="55" y="1" width="7" height="7" fill="#008080"/><rect x="64" y="1" width="7" height="7" fill="#c0c0c0"/><rect x="73" y="1" width="7" height="7" fill="#808080"/><rect x="82" y="1" width="7" height="7" fill="#ff0000"/><rect x="91" y="1" width="7" height="7" fill="#00ff00"/><rect x="100" y="1" width="7" height="7" fill="#ffff00"/><rect x="109" y="1" width="7" height="7" fill="#0000ff"/><rect x="118" y="1" width="7" height="7" fill="#ff00ff"/><rect x="127" y="1" width="7" height="7" fill="#00ffff"/><rect x="136" y="1" width="7" height="7" fill="#ffffff"/><rect x="1" y="10" width="7" height="7" fill="#202020"/><rect x="10" y="10" width="7" height="7" fill="#2e2e2e"/><rect x="19" y="10" width="7" height="7" fill="#3c3c3c"/><rect x="28" y="10" width="7" height="7" fill="#4a4a4a"/><rect x="37" y="10" width="7" height="7" fill="#585858"/><rect x="46" y="10" width="7" height="7" fill="#666666"/><rect x="55" y="10" width="7" height="7" fill="#747474"/><rect x="64" y="10" width="7" height="7" fill="#828282"/><rect x="73" y="10" width="7" height="7" fill="#909090"/><rect x="82" y="10" width="7" height="7" fill="#9e9e9e"/><rect x="91" y="10" width="7" height="7" fill="#acacac"/><rect x="100" y="10" width="7" height="7" fill="#bababa"/><rect x="109" y="10" width="7" height="7" fill="#c8c8c8"/><rect x="118" y="10" width="7" height="7" fill="#d6d6d6"/><rect x="127" y="10" width="7" height="7" fill="#e4e4e4"/><rect x="136" y="10" width="7" height="7" fill="#f2f2f2"/><rect x="1" y="19" width="7" height="7" fill="#380000"/><rect x="10" y="19" width="7" height="7" fill="#550000"/><rect x="19" y="19" width="7" height="7" fill="#710000"/><rect x="28" y="19" width="7" height="7" fill="#8d0000"/><rect x="37" y="19" width="7" height="7" fill="#aa0000"/><rect x="46" y="19" width="7" height="7" fill="#c60000"/><rect x="55" y="19" width="7" height="7" fill="#e30000"/><rect x="64" y="19" width="7" height="7" fill="#ff0000"/><rect x="73" y="19" width="7" height="7" fill="#ff1e1e"/><rect x="82" y="19" width="7" height="7" fill="#ff3c3c"/><rect x="91" y="19" width="7" height="7" fill="#ff5a5a"/><rect x="100" y="19" width="7" height="7" fill="#ff7878"/><rect x="109" y="19" width="7" height="7" fill="#ff9696"/><rect x="118" y="19" width="7" height="7" fill="#ffb4b4"/><rect x="127" y="19" width="7" height="7" fill="#ffd2d2"/><rect x="136" y="19" width="7" height="7" fill="#fff0f0"/><rect x="1" y="28" width="7" height="7" fill="#381500"/><rect x="10" y="28" width="7" height="7" fill="#551f00"/><rect x="19" y="28" width="7" height="7" fill="#712900"/><rect x="28" y="28" width="7" height="7" fill="#8d3400"/><rect x="37" y="28" width="7" height="7" fill="#aa3e00"/><rect x="46" y="28" width="7" height="7" fill="#c64900"/><rect x="55" y="28" width="7" height="7" fill="#e35300"/><rect x="64" y="28" width="7" height="7" fill="#ff5e00"/><rect x="73" y="28" width="7" height="7" fill="#ff701e"/><rect x="82" y="28" width="7" height="7" fill="#ff833c"/><rect x="91" y="28" width="7" height="7" fill="#ff965a"/><rect x="100" y="28" width="7" height="7" fill="#ffa978"/><rect x="109" y="28" width="7" height="7" fill="#ffbc96"/><rect x="118" y="28" width="7" height="7" fill="#ffcfb4"/><rect x="127" y="28" width="7" height="7" fill="#ffe2d2"/><rect x="136" y="28" width="7" height="7" fill="#fff5f0"/><rect x="1" y="37" width="7" height="7" fill="#382900"/><rect x="10" y="37" width="7" height="7" fill="#553e00"/><rect x="19" y="37" width="7" height="7" fill="#715300"/><rect x="28" y="37" width="7" height="7" fill="#8d6800"/><rect x="37" y="37" width="7" height="7" fill="#aa7c00"/><rect x="46" y="37" width="7" height="7" fill="#c69100"/><rect x="55" y="37" width="7" height="7" fill="#e3a600"/><rect x="64" y="37" width="7" height="7" fill="#ffbb00"/><rect x="73" y="37" width="7" height="7" fill="#ffc31e"/><rect x="82" y="37" width="7" height="7" fill="#ffcb3c"/><rect x="91" y="37" width="7" height="7" fill="#ffd35a"/><rect x="100" y="37" width="7" height="7" fill="#ffdb78"/><rect x="109" y="37" width="7" height="7" fill="#ffe396"/><rect x="118" y="37" width="7" height="7" fill="#ffebb4"/><rect x="127" y="37" width="7" height="7" fill="#fff3d2"/><rect x="136" y="37" width="7" height="7" fill="#fffbf0"/><rect x="1" y="46" width="7" height="7" fill="#323800"/><rect x="10" y="46" width="7" height="7" fill="#4c5500"/><rect x="19" y="46" width="7" height="7" fill="#667100"/><rect x="28" y="46" width="7" height="7" fill="#7f8d00"/><rect x="37" y="46" width="7" height="7" fill="#99aa00"/><rect x="46" y="46" width="7" height="7" fill="#b2c600"/><rect x="55" y="46" width="7" height="7" fill="#cce300"/><rect x="64" y="46" width="7" height="7" fill="#e6ff00"/><rect x="73" y="46" width="7" height="7" fill="#e8ff1e"/><rect x="82" y="46" width="7" height="7" fill="#ebff3c"/><rect x="91" y="46" width="7" height="7" fill="#eeff5a"/><rect x="100" y="46" width="7" height="7" fill="#f1ff78"/><rect x="109" y="46" width="7" height="7" fill="#f4ff96"/><rect x="118" y="46" width="7" height="7" fill="#f7ffb4"/><rect x="127" y="46" width="7" height="7" fill="#faffd2"/><rect x="136" y="46" width="7" height="7" fill="#fdfff0"/><rect x="1" y="55" width="7" height="7" fill="#203800"/><rect x="10" y="55" width="7" height="7" fill="#305500"/><rect x="19" y="55" width="7" height="7" fill="#407100"/><rect x="28" y="55" width="7" height="7" fill="#508d00"/><rect x="37" y="55" width="7" height="7" fill="#60aa00"/><rect x="46" y="55" width="7" height="7" fill="#70c600"/><rect x="55" y="55" width="7" height="7" fill="#80e300"/><rect x="64" y="55" width="7" height="7" fill="#91ff00"/><rect x="73" y="55" width="7" height="7" fill="#9dff1e"/><rect x="82" y="55" width="7" height="7" fill="#aaff3c"/><rect x="91" y="55" width="7" height="7" fill="#b7ff5a"/><rect x="100" y="55" width="7" height="7" fill="#c4ff78"/><rect x="109" y="55" width="7" height="7" fill="#d1ff96"/><rect x="118" y="55" width="7" height="7" fill="#deffb4"/><rect x="127" y="55" width="7" height="7" fill="#ebffd2"/><rect x="136" y="55" width="7" height="7" fill="#f8fff0"/><rect x="1" y="64" width="7" height="7" fill="#073800"/><rect x="10" y="64" width="7" height="7" fill="#0b5500"/><rect x="19" y="64" width="7" height="7" fill="#0f7100"/><rect x="28" y="64" width="7" height="7" fill="#138d00"/><rect x="37" y="64" width="7" height="7" fill="#17aa00"/><rect x="46" y="64" width="7" height="7" fill="#1ac600"/><rect x="55" y="64" width="7" height="7" fill="#1ee300"/><rect x="64" y="64" width="7" height="7" fill="#22ff00"/><rect x="73" y="64" width="7" height="7" fill="#3cff1e"/><rect x="82" y="64" width="7" height="7" fill="#56ff3c"/><rect x="91" y="64" width="7" height="7" fill="#70ff5a"/><rect x="100" y="64" width="7" height="7" fill="#8aff78"/><rect x="109" y="64" width="7" height="7" fill="#a4ff96"/><rect x="118" y="64" width="7" height="7" fill="#beffb4"/><rect x="127" y="64" width="7" height="7" fill="#d8ffd2"/><rect x="136" y="64" width="7" height="7" fill="#f2fff0"/><rect x="1" y="73" width="7" height="7" fill="#00380f"/><rect x="10" y="73" width="7" height="7" fill="#005517"/><rect x="19" y="73" width="7" height="7" fill="#00711e"/><rect x="28" y="73" width="7" height="7" fill="#008d26"/><rect x="37" y="73" width="7" height="7" fill="#00aa2d"/><rect x="46" y="73" width="7" height="7" fill="#00c635"/><rect x="55" y="73" width="7" height="7" fill="#00e33c"/><rect x="64" y="73" width="7" height="7" fill="#00ff44"/><rect x="73" y="73" width="7" height="7" fill="#1eff5a"/><rect x="82" y="73" width="7" height="7" fill="#3cff70"/><rect x="91" y="73" width="7" height="7" fill="#5aff86"/><rect x="100" y="73" width="7" height="7" fill="#78ff9c"/><rect x="109" y="73" width="7" height="7" fill="#96ffb2"/><rect x="118" y="73" width="7" height="7" fill="#b4ffc8"/><rect x="127" y="73" width="7" height="7" fill="#d2ffde"/><rect x="136" y="73" width="7" height="7" fill="#f0fff4"/><rect x="1" y="82" width="7" height="7" fill="#003825"/><rect x="10" y="82" width="7" height="7" fill="#005538"/><rect x="19" y="82" width="7" height="7" fill="#00714b"/><rect x="28" y="82" width="7" height="7" fill="#008d5e"/><rect x="37" y="82" width="7" height="7" fill="#00aa71"/><rect x="46" y="82" width="7" height="7" fill="#00c684"/><rect x="55" y="82" width="7" height="7" fill="#00e397"/><rect x="64" y="82" width="7" height="7" fill="#00ffaa"/><rect x="73" y="82" width="7" height="7" fill="#1effb4"/><rect x="82" y="82" width="7" height="7" fill="#3cffbe"/><rect x="91" y="82" width="7" height="7" fill="#5affc8"/><rect x="100" y="82" width="7" height="7" fill="#78ffd2"/><rect x="109" y="82" width="7" height="7" fill="#96ffdc"/><rect x="118" y="82" width="7" height="7" fill="#b4ffe6"/><rect x="127" y="82" width="7" height="7" fill="#d2fff0"/><rect x="136" y="82" width="7" height="7" fill="#f0fffa"/><rect x="1" y="91" width="7" height="7" fill="#003838"/><rect x="10" y="91" width="7" height="7" fill="#005555"/><rect x="19" y="91" width="7" height="7" fill="#007171"/><rect x="28" y="91" width="7" height="7" fill="#008d8d"/><rect x="37" y="91" width="7" height="7" fill="#00aaaa"/><rect x="46" y="91" width="7" height="7" fill="#00c6c6"/><rect x="55" y="91" width="7" height="7" fill="#00e3e3"/><rect x="64" y="91" width="7" height="7" fill="#00ffff"/><rect x="73" y="91" width="7" height="7" fill="#1effff"/><rect x="82" y="91" width="7" height="7" fill="#3cffff"/><rect x="91" y="91" width="7" height="7" fill="#5affff"/><rect x="100" y="91" width="7" height="7" fill="#78ffff"/><rect x="109" y="91" width="7" height="7" fill="#96ffff"/><rect x="118" y="91" width="7" height="7" fill="#b4ffff"/><rect x="127" y="91" width="7" height="7" fill="#d2ffff"/><rect x="136" y="91" width="7" height="7" fill="#f0ffff"/><rect x="1" y="100" width="7" height="7" fill="#002238"/><rect x="10" y="100" width="7" height="7" fill="#003355"/><rect x="19" y="100" width="7" height="7" fill="#004471"/><rect x="28" y="100" width="7" height="7" fill="#00558d"/><rect x="37" y="100" width="7" height="7" fill="#0066aa"/><rect x="46" y="100" width="7" height="7" fill="#0077c6"/><rect x="55" y="100" width="7" height="7" fill="#0088e3"/><rect x="64" y="100" width="7" height="7" fill="#0099ff"/><rect x="73" y="100" width="7" height="7" fill="#1ea5ff"/><rect x="82" y="100" width="7" height="7" fill="#3cb1ff"/><rect x="91" y="100" width="7" height="7" fill="#5abdff"/><rect x="100" y="100" width="7" height="7" fill="#78c9ff"/><rect x="109" y="100" width="7" height="7" fill="#96d5ff"/><rect x="118" y="100" width="7" height="7" fill="#b4e1ff"/><rect x="127" y="100" width="7" height="7" fill="#d2edff"/><rect x="136" y="100" width="7" height="7" fill="#f0f9ff"/><rect x="1" y="109" width="7" height="7" fill="#000f38"/><rect x="10" y="109" width="7" height="7" fill="#001755"/><rect x="19" y="109" width="7" height="7" fill="#001e71"/><rect x="28" y="109" width="7" height="7" fill="#00268d"/><rect x="37" y="109" width="7" height="7" fill="#002daa"/><rect x="46" y="109" width="7" height="7" fill="#0035c6"/><rect x="55" y="109" width="7" height="7" fill="#003ce3"/><rect x="64" y="109" width="7" height="7" fill="#0044ff"/><rect x="73" y="109" width="7" height="7" fill="#1e5aff"/><rect x="82" y="109" width="7" height="7" fill="#3c70ff"/><rect x="91" y="109" width="7" height="7" fill="#5a86ff"/><rect x="100" y="109" width="7" height="7" fill="#789cff"/><rect x="109" y="109" width="7" height="7" fill="#96b2ff"/><rect x="118" y="109" width="7" height="7" fill="#b4c8ff"/><rect x="127" y="109" width="7" height="7" fill="#d2deff"/><rect x="136" y="109" width="7" height="7" fill="#f0f4ff"/><rect x="1" y="118" width="7" height="7" fill="#070038"/><rect x="10" y="118" width="7" height="7" fill="#0a0055"/><rect x="19" y="118" width="7" height="7" fill="#0d0071"/><rect x="28" y="118" width="7" height="7" fill="#10008d"/><rect x="37" y="118" width="7" height="7" fill="#1400aa"/><rect x="46" y="118" width="7" height="7" fill="#1700c6"/><rect x="55" y="118" width="7" height="7" fill="#1a00e3"/><rect x="64" y="118" width="7" height="7" fill="#1e00ff"/><rect x="73" y="118" width="7" height="7" fill="#381eff"/><rect x="82" y="118" width="7" height="7" fill="#533cff"/><rect x="91" y="118" width="7" height="7" fill="#6d5aff"/><rect x="100" y="118" width="7" height="7" fill="#8878ff"/><rect x="109" y="118" width="7" height="7" fill="#a296ff"/><rect x="118" y="118" width="7" height="7" fill="#bdb4ff"/><rect x="127" y="118" width="7" height="7" fill="#d7d2ff"/><rect x="136" y="118" width="7" height="7" fill="#f1f0ff"/><rect x="1" y="127" width="7" height="7" fill="#1c0038"/><rect x="10" y="127" width="7" height="7" fill="#2a0055"/><rect x="19" y="127" width="7" height="7" fill="#380071"/><rect x="28" y="127" width="7" height="7" fill="#47008d"/><rect x="37" y="127" width="7" height="7" fill="#5500aa"/><rect x="46" y="127" width="7" height="7" fill="#6300c6"/><rect x="55" y="127" width="7" height="7" fill="#7100e3"/><rect x="64" y="127" width="7" height="7" fill="#8000ff"/><rect x="73" y="127" width="7" height="7" fill="#8e1eff"/><rect x="82" y="127" width="7" height="7" fill="#9d3cff"/><rect x="91" y="127" width="7" height="7" fill="#ac5aff"/><rect x="100" y="127" width="7" height="7" fill="#bb78ff"/><rect x="109" y="127" width="7" height="7" fill="#ca96ff"/><rect x="118" y="127" width="7" height="7" fill="#d9b4ff"/><rect x="127" y="127" width="7" height="7" fill="#e8d2ff"/><rect x="136" y="127" width="7" height="7" fill="#f7f0ff"/><rect x="1" y="136" width="7" height="7" fill="#320038"/><rect x="10" y="136" width="7" height="7" fill="#4c0055"/><rect x="19" y="136" width="7" height="7" fill="#660071"/><rect x="28" y="136" width="7" height="7" fill="#7f008d"/><rect x="37" y="136" width="7" height="7" fill="#9900aa"/><rect x="46" y="136" width="7" height="7" fill="#b200c6"/><rect x="55" y="136" width="7" height="7" fill="#cc00e3"/><rect x="64" y="136" width="7" height="7" fill="#e600ff"/><rect x="73" y="136" width="7" height="7" fill="#e81eff"/><rect x="82" y="136" width="7" height="7" fill="#eb3cff"/><rect x="91" y="136" width="7" height="7" fill="#ee5aff"/><rect x="100" y="136" width="7" height="7" fill="#f178ff"/><rect x="109" y="136" width="7" height="7" fill="#f496ff"/><rect x="118" y="136" width="7" height="7" fill="#f7b4ff"/><rect x="127" y="136" width="7" height="7" fill="#fad2ff"/><rect x="136" y="136" width="7" height="7" fill="#fdf0ff"/><path d="M1.5,1.5h6v6h-6zM10.5,1.5h6v6h-6zM19.5,1.5h6v6h-6zM28.5,1.5h6v6h-6zM37.5,1.5h6v6h-6zM46.5,1.5h6v6h-6zM55.5,1.5h6v6h-6zM64.5,1.5h6v6h-6zM73.5,1.5h6v6h-6zM82.5,1.5h6v6h-6zM91.5,1.5h6v6h-6zM100.5,1.5h6v6h-6zM109.5,1.5h6v6h-6zM118.5,1.5h6v6h-6zM127.5,1.5h6v6h-6zM136.5,1.5h6v6h-6zM1.5,10.5h6v6h-6zM10.5,10.5h6v6h-6zM19.5,10.5h6v6h-6zM28.5,10.5h6v6h-6zM37.5,10.5h6v6h-6zM46.5,10.5h6v6h-6zM55.5,10.5h6v6h-6zM64.5,10.5h6v6h-6zM73.5,10.5h6v6h-6zM82.5,10.5h6v6h-6zM91.5,10.5h6v6h-6zM100.5,10.5h6v6h-6zM109.5,10.5h6v6h-6zM118.5,10.5h6v6h-6zM127.5,10.5h6v6h-6zM136.5,10.5h6v6h-6zM1.5,19.5h6v6h-6zM10.5,19.5h6v6h-6zM19.5,19.5h6v6h-6zM28.5,19.5h6v6h-6zM37.5,19.5h6v6h-6zM46.5,19.5h6v6h-6zM55.5,19.5h6v6h-6zM64.5,19.5h6v6h-6zM73.5,19.5h6v6h-6zM82.5,19.5h6v6h-6zM91.5,19.5h6v6h-6zM100.5,19.5h6v6h-6zM109.5,19.5h6v6h-6zM118.5,19.5h6v6h-6zM127.5,19.5h6v6h-6zM136.5,19.5h6v6h-6zM1.5,28.5h6v6h-6zM10.5,28.5h6v6h-6zM19.5,28.5h6v6h-6zM28.5,28.5h6v6h-6zM37.5,28.5h6v6h-6zM46.5,28.5h6v6h-6zM55.5,28.5h6v6h-6zM64.5,28.5h6v6h-6zM73.5,28.5h6v6h-6zM82.5,28.5h6v6h-6zM91.5,28.5h6v6h-6zM100.5,28.5h6v6h-6zM109.5,28.5h6v6h-6zM118.5,28.5h6v6h-6zM127.5,28.5h6v6h-6zM136.5,28.5h6v6h-6zM1.5,37.5h6v6h-6zM10.5,37.5h6v6h-6zM19.5,37.5h6v6h-6zM28.5,37.5h6v6h-6zM37.5,37.5h6v6h-6zM46.5,37.5h6v6h-6zM55.5,37.5h6v6h-6zM64.5,37.5h6v6h-6zM73.5,37.5h6v6h-6zM82.5,37.5h6v6h-6zM91.5,37.5h6v6h-6zM100.5,37.5h6v6h-6zM109.5,37.5h6v6h-6zM118.5,37.5h6v6h-6zM127.5,37.5h6v6h-6zM136.5,37.5h6v6h-6zM1.5,46.5h6v6h-6zM10.5,46.5h6v6h-6zM19.5,46.5h6v6h-6zM28.5,46.5h6v6h-6zM37.5,46.5h6v6h-6zM46.5,46.5h6v6h-6zM55.5,46.5h6v6h-6zM64.5,46.5h6v6h-6zM73.5,46.5h6v6h-6zM82.5,46.5h6v6h-6zM91.5,46.5h6v6h-6zM100.5,46.5h6v6h-6zM109.5,46.5h6v6h-6zM118.5,46.5h6v6h-6zM127.5,46.5h6v6h-6zM136.5,46.5h6v6h-6zM1.5,55.5h6v6h-6zM10.5,55.5h6v6h-6zM19.5,55.5h6v6h-6zM28.5,55.5h6v6h-6zM37.5,55.5h6v6h-6zM46.5,55.5h6v6h-6zM55.5,55.5h6v6h-6zM64.5,55.5h6v6h-6zM73.5,55.5h6v6h-6zM82.5,55.5h6v6h-6zM91.5,55.5h6v6h-6zM100.5,55.5h6v6h-6zM109.5,55.5h6v6h-6zM118.5,55.5h6v6h-6zM127.5,55.5h6v6h-6zM136.5,55.5h6v6h-6zM1.5,64.5h6v6h-6zM10.5,64.5h6v6h-6zM19.5,64.5h6v6h-6zM28.5,64.5h6v6h-6zM37.5,64.5h6v6h-6zM46.5,64.5h6v6h-6zM55.5,64.5h6v6h-6zM64.5,64.5h6v6h-6zM73.5,64.5h6v6h-6zM82.5,64.5h6v6h-6zM91.5,64.5h6v6h-6zM100.5,64.5h6v6h-6zM109.5,64.5h6v6h-6zM118.5,64.5h6v6h-6zM127.5,64.5h6v6h-6zM136.5,64.5h6v6h-6zM1.5,73.5h6v6h-6zM10.5,73.5h6v6h-6zM19.5,73.5h6v6h-6zM28.5,73.5h6v6h-6zM37.5,73.5h6v6h-6zM46.5,73.5h6v6h-6zM55.5,73.5h6v6h-6zM64.5,73.5h6v6h-6zM73.5,73.5h6v6h-6zM82.5,73.5h6v6h-6zM91.5,73.5h6v6h-6zM100.5,73.5h6v6h-6zM109.5,73.5h6v6h-6zM118.5,73.5h6v6h-6zM127.5,73.5h6v6h-6zM136.5,73.5h6v6h-6zM1.5,82.5h6v6h-6zM10.5,82.5h6v6h-6zM19.5,82.5h6v6h-6zM28.5,82.5h6v6h-6zM37.5,82.5h6v6h-6zM46.5,82.5h6v6h-6zM55.5,82.5h6v6h-6zM64.5,82.5h6v6h-6zM73.5,82.5h6v6h-6zM82.5,82.5h6v6h-6zM91.5,82.5h6v6h-6zM100.5,82.5h6v6h-6zM109.5,82.5h6v6h-6zM118.5,82.5h6v6h-6zM127.5,82.5h6v6h-6zM136.5,82.5h6v6h-6zM1.5,91.5h6v6h-6zM10.5,91.5h6v6h-6zM19.5,91.5h6v6h-6zM28.5,91.5h6v6h-6zM37.5,91.5h6v6h-6zM46.5,91.5h6v6h-6zM55.5,91.5h6v6h-6zM64.5,91.5h6v6h-6zM73.5,91.5h6v6h-6zM82.5,91.5h6v6h-6zM91.5,91.5h6v6h-6zM100.5,91.5h6v6h-6zM109.5,91.5h6v6h-6zM118.5,91.5h6v6h-6zM127.5,91.5h6v6h-6zM136.5,91.5h6v6h-6zM1.5,100.5h6v6h-6zM10.5,100.5h6v6h-6zM19.5,100.5h6v6h-6zM28.5,100.5h6v6h-6zM37.5,100.5h6v6h-6zM46.5,100.5h6v6h-6zM55.5,100.5h6v6h-6zM64.5,100.5h6v6h-6zM73.5,100.5h6v6h-6zM82.5,100.5h6v6h-6zM91.5,100.5h6v6h-6zM100.5,100.5h6v6h-6zM109.5,100.5h6v6h-6zM118.5,100.5h6v6h-6zM127.5,100.5h6v6h-6zM136.5,100.5h6v6h-6zM1.5,109.5h6v6h-6zM10.5,109.5h6v6h-6zM19.5,109.5h6v6h-6zM28.5,109.5h6v6h-6zM37.5,109.5h6v6h-6zM46.5,109.5h6v6h-6zM55.5,109.5h6v6h-6zM64.5,109.5h6v6h-6zM73.5,109.5h6v6h-6zM82.5,109.5h6v6h-6zM91.5,109.5h6v6h-6zM100.5,109.5h6v6h-6zM109.5,109.5h6v6h-6zM118.5,109.5h6v6h-6zM127.5,109.5h6v6h-6zM136.5,109.5h6v6h-6zM1.5,118.5h6v6h-6zM10.5,118.5h6v6h-6zM19.5,118.5h6v6h-6zM28.5,118.5h6v6h-6zM37.5,118.5h6v6h-6zM46.5,118.5h6v6h-6zM55.5,118.5h6v6h-6zM64.5,118.5h6v6h-6zM73.5,118.5h6v6h-6zM82.5,118.5h6v6h-6zM91.5,118.5h6v6h-6zM100.5,118.5h6v6h-6zM109.5,118.5h6v6h-6zM118.5,118.5h6v6h-6zM127.5,118.5h6v6h-6zM136.5,118.5h6v6h-6zM1.5,127.5h6v6h-6zM10.5,127.5h6v6h-6zM19.5,127.5h6v6h-6zM28.5,127.5h6v6h-6zM37.5,127.5h6v6h-6zM46.5,127.5h6v6h-6zM55.5,127.5h6v6h-6zM64.5,127.5h6v6h-6zM73.5,127.5h6v6h-6zM82.5,127.5h6v6h-6zM91.5,127.5h6v6h-6zM100.5,127.5h6v6h-6zM109.5,127.5h6v6h-6zM118.5,127.5h6v6h-6zM127.5,127.5h6v6h-6zM136.5,127.5h6v6h-6zM1.5,136.5h6v6h-6zM10.5,136.5h6v6h-6zM19.5,136.5h6v6h-6zM28.5,136.5h6v6h-6zM37.5,136.5h6v6h-6zM46.5,136.5h6v6h-6zM55.5,136.5h6v6h-6zM64.5,136.5h6v6h-6zM73.5,136.5h6v6h-6zM82.5,136.5h6v6h-6zM91.5,136.5h6v6h-6zM100.5,136.5h6v6h-6zM109.5,136.5h6v6h-6zM118.5,136.5h6v6h-6zM127.5,136.5h6v6h-6zM136.5,136.5h6v6h-6z" fill="none" stroke="#fff" stroke-opacity=".25" stroke-width="1"/></svg><div class="sl" style="left:1772px;top:486px;width:118px"></div><span class="t" style="left:1779px;top:486px;font-size:9.5px;color:#c8c8c8;line-height:14px;font-weight:bold;letter-spacing:-.2px">Opacity</span><div class="hd" style="left:1868px;top:486px;background:linear-gradient(#7ab0dc,#3a86c4 55%,#5a9ad0)"></div><svg style="left:1868px;top:486px" width="22" height="12" viewBox="0 0 22 12" ><path d="M8.500,2.500 V9.500 L4.500,6Z M13.500,2.500 V9.500 L17.500,6Z" fill="#fff" fill-opacity=".85"/><path d="M11,1 V11" stroke="#fff" stroke-opacity=".7" stroke-width="1"/></svg><div class="vb" style="left:1893px;top:484px;width:24px;height:15px">255</div><div class="sl" style="left:1772px;top:503px;width:118px"></div><div class="hd" style="left:1772px;top:503px;background:linear-gradient(#ff7a8a,#e81a3a 55%,#f04a60)"></div><svg style="left:1772px;top:503px" width="22" height="12" viewBox="0 0 22 12" ><path d="M8.500,2.500 V9.500 L4.500,6Z M13.500,2.500 V9.500 L17.500,6Z" fill="#fff" fill-opacity=".85"/><path d="M11,1 V11" stroke="#fff" stroke-opacity=".7" stroke-width="1"/></svg><div class="vb" style="left:1893px;top:501px;width:24px;height:15px">0</div><div class="sl" style="left:1772px;top:520px;width:118px"></div><span class="t" style="left:1795px;top:520px;font-size:9.5px;color:#c8c8c8;line-height:14px;font-weight:bold">en</span><div class="hd" style="left:1772px;top:520px;background:linear-gradient(#8aff8a,#18d018 55%,#4ae84a)"></div><svg style="left:1772px;top:520px" width="22" height="12" viewBox="0 0 22 12" ><path d="M8.500,2.500 V9.500 L4.500,6Z M13.500,2.500 V9.500 L17.500,6Z" fill="#fff" fill-opacity=".85"/><path d="M11,1 V11" stroke="#fff" stroke-opacity=".7" stroke-width="1"/></svg><div class="vb" style="left:1893px;top:518px;width:24px;height:15px">0</div><div class="sl" style="left:1772px;top:537px;width:118px"></div><span class="t" style="left:1795px;top:537px;font-size:9.5px;color:#c8c8c8;line-height:14px;font-weight:bold">e</span><div class="hd" style="left:1772px;top:537px;background:linear-gradient(#6a9aff,#1a4ae0 55%,#3a6af0)"></div><svg style="left:1772px;top:537px" width="22" height="12" viewBox="0 0 22 12" ><path d="M8.500,2.500 V9.500 L4.500,6Z M13.500,2.500 V9.500 L17.500,6Z" fill="#fff" fill-opacity=".85"/><path d="M11,1 V11" stroke="#fff" stroke-opacity=".7" stroke-width="1"/></svg><div class="vb" style="left:1893px;top:535px;width:24px;height:15px">0</div><div style="left:1790px;top:572px;width:32px;height:29px;border:1px solid #767c8c;background:#fff"></div><div style="left:1792px;top:574px;width:28px;height:25px;background:repeating-conic-gradient(#ececec 0 25%,#fff 0 50%) 0 0/8px 8px"></div><div style="left:1774px;top:559px;width:32px;height:30px;background:#000;border:2px solid #767c8c;box-shadow:inset 0 0 0 1px #fff"></div><div style="left:1777px;top:593px;width:10px;height:8px;background:#fff;border:1px solid #767c8c"></div><div style="left:1774px;top:590px;width:10px;height:8px;background:#000;border:1px solid #767c8c"></div><svg style="left:1808px;top:558px" width="13" height="13" viewBox="0 0 13 13" ><path d="M1,3.500 H8 Q10.500,3.500 10.500,6 V11" fill="none" stroke="#5a6078" stroke-width="1"/><path d="M3.500,1 L1,3.500 L3.500,6 M8,8.500 L10.500,11 L13,8.500" fill="none" stroke="#5a6078" stroke-width="1"/></svg><span class="t" style="left:1827px;top:555.6px;font-size:9.5px;color:#5a6078;line-height:14px">R :</span><span class="t" style="left:1838px;top:555.6px;font-size:9.5px;color:#5a6078;line-height:14px;width:26px;text-align:center">0</span><span class="t" style="left:1827px;top:565.7px;font-size:9.5px;color:#5a6078;line-height:14px">G :</span><span class="t" style="left:1838px;top:565.7px;font-size:9.5px;color:#5a6078;line-height:14px;width:26px;text-align:center">0</span><span class="t" style="left:1827px;top:575.8000000000001px;font-size:9.5px;color:#5a6078;line-height:14px">B :</span><span class="t" style="left:1838px;top:575.8000000000001px;font-size:9.5px;color:#5a6078;line-height:14px;width:26px;text-align:center">0</span><span class="t" style="left:1827px;top:585.9px;font-size:9.5px;color:#5a6078;line-height:14px">A :</span><span class="t" style="left:1838px;top:585.9px;font-size:9.5px;color:#5a6078;line-height:14px;width:26px;text-align:center">255</span><span class="t" style="left:1875px;top:555.6px;font-size:9.5px;color:#5a6078;line-height:14px;letter-spacing:.55px">HTML:</span><div class="vb" style="left:1866px;top:568px;width:51px;height:15px;letter-spacing:.25px">#000000</div><svg style="left:1872px;top:586px" width="16" height="15" viewBox="0 0 17 16" ><path d="M.500,.500 H6 L9,3.500 V11 H.500Z" fill="#f0f2f8" stroke="#8a8e9c"/><path d="M5.500,4.500 H11 L14.500,8 V15.500 H5.500Z" fill="#fff" stroke="#6a6e7c"/><path d="M7.500,10 H12.500 M7.500,12.500 H12.500" stroke="#aaa" stroke-width="1"/><rect x="7" y="5.500" width="4" height="2.500" fill="#b4c4f0"/></svg><svg style="left:1895px;top:586px" width="17" height="16" viewBox="0 0 17 16" ><rect x=".600" y="1.600" width="10" height="12" rx="1.300" fill="url(#gclip2)" stroke="#9a6a08"/><path d="M6.500,5.500 H12 L15.500,9 V15.500 H6.500Z" fill="#fff" stroke="#6a6e7c"/><path d="M8.500,11 H13.500 M8.500,13 H13.500" stroke="#aaa" stroke-width="1"/><rect x="8" y="6.500" width="4" height="2.500" fill="#b4c4f0"/></svg><div style="left:1772px;top:613px;width:146px;height:161px;border:1px solid #8aa8d4;background:#fff"></div><div style="left:1775px;top:616px;width:140px;height:155px;background:#e1e1e1"></div><svg style="left:1799px;top:640px" width="62" height="62" viewBox="0 0 62 62" ><defs><linearGradient id="chh"><stop offset="0" stop-color="#707070" stop-opacity="0"/><stop offset=".5" stop-color="#707070"/><stop offset="1" stop-color="#707070" stop-opacity="0"/></linearGradient><linearGradient id="chv" x1="0" y1="0" x2="0" y2="1"><stop offset="0" stop-color="#707070" stop-opacity="0"/><stop offset=".5" stop-color="#707070"/><stop offset="1" stop-color="#707070" stop-opacity="0"/></linearGradient></defs><rect x="0" y="30" width="62" height="1" fill="url(#chh)"/><rect x="30" y="0" width="1" height="62" fill="url(#chv)"/></svg><svg style="left:1834px;top:673px" width="17" height="22" viewBox="0 0 17 22" ><use href="#arw" width="17" height="22"/></svg><div style="left:1781px;top:749px;width:23px;height:16px;background:#a9a9a9;border-radius:2px;box-shadow:inset 0 0 0 1px #b8b8b8"></div><div style="left:1809px;top:749px;width:23px;height:16px;background:#a9a9a9;border-radius:2px;box-shadow:inset 0 0 0 1px #b8b8b8"></div><svg style="left:1785px;top:750px" width="15" height="14" viewBox="0 0 15 14" ><circle cx="7.500" cy="7" r="6" fill="none" stroke="#fff" stroke-width="1.200"/><path d="M7.500,1 A6,6 0 0 1 7.500,13Z" fill="#fff"/></svg><svg style="left:1811px;top:750px" width="20" height="14" viewBox="0 0 20 14" ><path d="M1,12.500 Q4.500,12 4,7 Q3.500,2.500 6,2.500 Q8.500,2.500 8,7 Q8,9 9.500,8" fill="none" stroke="#fff" stroke-width="1.100"/><rect x="9" y="2.500" width="7.500" height="10" rx="3" fill="#fff" transform="rotate(-42 12.700 7.500)"/><path d="M11,3.500 L14.500,7.200" stroke="#a9a9a9" stroke-width=".8"/></svg>
<div style="left:2px;top:122px;width:1766px;height:20px;background:#2a2a2a"></div>
<div style="left:3px;top:123px;width:1765px;height:885px;border-radius:6px 6px 0 0;border:1px solid #fff;border-right-color:#000;border-bottom-color:#000;background:linear-gradient(#9bb4d2 0,#a3bcd9 10px,#b9d1ea 30px,#b9d1ea 100%);box-shadow:inset -1px -1px 0 #3fd8f4"></div>
<svg style="left:12px;top:133px" width="16" height="16" viewBox="0 0 16 16" ><path d="M5.5,1.5 H12 L14.5,4 V14.5 H5.5 Z" fill="#fff" stroke="#c8c8d0"/><rect x=".5" y="4.5" width="11" height="11" rx="1" fill="url(#gpurp)"/><path d="M3.5,6 V13 L5.2,11.4 L6.4,14 L7.6,13.5 L6.4,11 H8.6 Z" fill="#fff"/></svg>
<span class="t" style="left:32px;top:134px;font-size:13px;color:#000;letter-spacing:0.05px">Arrow - Static Cursor</span>
<div style="left:1658px;top:132px;width:32px;height:18px;border:1px solid #667f9f;border-radius:3px;background:linear-gradient(#c5d8ee 0,#bcd1ea 8px,#9cb7d6 9px,#b0c8e4 100%);box-shadow:inset 0 0 0 1px rgba(255,255,255,.45), 0 0 0 1px rgba(255,255,255,.25)"></div><div style="left:1692px;top:132px;width:32px;height:18px;border:1px solid #667f9f;border-radius:3px;background:linear-gradient(#c5d8ee 0,#bcd1ea 8px,#9cb7d6 9px,#b0c8e4 100%);box-shadow:inset 0 0 0 1px rgba(255,255,255,.45), 0 0 0 1px rgba(255,255,255,.25)"></div><div style="left:1726px;top:132px;width:32px;height:18px;border:1px solid #4c1416;border-radius:3px;background:linear-gradient(#e9a898 0,#dc8472 8px,#c2401f 9px,#d4664a 100%);box-shadow:inset 0 0 0 1px rgba(255,255,255,.45), 0 0 0 1px rgba(255,255,255,.25)"></div><svg style="left:1668px;top:141px" width="12" height="5" viewBox="0 0 12 5" ><rect x=".5" y=".5" width="10" height="3.4" rx="1" fill="#f4f4f4" stroke="#555c68" stroke-width=".9"/></svg><svg style="left:1702px;top:136px" width="12" height="10" viewBox="0 0 12 10" ><rect x=".6" y=".6" width="10" height="8" rx="1" fill="#f4f4f4" stroke="#555c68" stroke-width=".9"/><rect x="3.1" y="3.1" width="5" height="2.6" fill="#8eaace" stroke="#555c68" stroke-width=".9"/></svg><svg style="left:1736px;top:135.5px" width="12" height="10" viewBox="0 0 14 11" ><path d="M.8,.8 H4.6 L7,3.4 L9.4,.8 H13.2 L9,5.5 L13.2,10.2 H9.4 L7,7.6 L4.6,10.2 H.8 L5,5.5 Z" fill="#f8f8f8" stroke="#3c3c44" stroke-width="1" stroke-linejoin="round"/></svg>
<div style="left:10px;top:153px;width:1750px;height:847px;background:#6f7b92"></div>
<div style="left:11px;top:154px;width:1748px;height:30px;background:linear-gradient(#fefefe 0,#f3f5fa 7px,#e7ebf6 14.5px,#d0d7ea 15px,#ced6e9 30px)"></div>
<div style="left:11px;top:184px;width:1748px;height:1px;background:#7f8da6"></div>
<svg style="left:20px;top:161px" width="16" height="16" viewBox="0 0 16 16" ><use href="#floppyb" width="16" height="16"/></svg><svg style="left:43px;top:161px" width="18" height="17" viewBox="0 0 18 17" ><rect x=".5" y=".5" width="14" height="12" fill="#fff" stroke="#9c9c9c" stroke-width="1"/><rect x="0" y="0" width="15" height="3.500" fill="#f0563a"/><rect x="0" y="0" width="15" height="1.500" fill="#f58a74"/><rect x="1" y="3.500" width="4.500" height="8.500" fill="#f6cac2"/><rect x="5.200" y="3.500" width=".8" height="8.500" fill="#f0867a"/><use href="#plus" x="7" y="6" width="10.5" height="10.5"/></svg><svg style="left:67px;top:161px" width="18" height="17" viewBox="0 0 18 17" ><rect x=".5" y=".5" width="14" height="12" fill="#fff" stroke="#9c9c9c" stroke-width="1"/><rect x="0" y="0" width="15" height="3.500" fill="#f0563a"/><rect x="0" y="0" width="15" height="1.500" fill="#f58a74"/><rect x="1" y="3.500" width="4.500" height="8.500" fill="#f6cac2"/><rect x="5.200" y="3.500" width=".8" height="8.500" fill="#f0867a"/><circle cx="5.500" cy="9" r="3.600" fill="#2a8af0"/><ellipse cx="5.500" cy="10.500" rx="2.600" ry="1.600" fill="#8ad4ff"/><use href="#plus" x="7" y="6" width="10.5" height="10.5"/></svg><svg style="left:90px;top:160px" width="19" height="18" viewBox="0 0 19 18" ><rect x=".5" y=".5" width="11" height="11" fill="url(#gpurp)"/><path d="M4,2 V9 L5.8,7.4 L7,10 L8.2,9.5 L7,7 H9.2 Z" fill="#fff"/><path d="M1,12 Q1,9 4,9 V7.5 L7,10.5 L4,13.5 V12 Q3,12 3,14 Z" fill="#58c040"/><rect x="6.5" y="7.5" width="10" height="8" fill="#dfe3ea" stroke="#8a8e98"/><rect x="8.5" y="9.5" width="6" height="4" fill="#8fb4f0"/><path d="M18,14 V17.5 H14.5Z" fill="#5a4a90"/></svg><div style="left:115px;top:160px;width:1px;height:19px;background:#9aa0b8"></div><div style="left:116px;top:160px;width:1px;height:19px;background:#f6f8fc"></div><div style="left:123px;top:159px;width:130px;height:21px;background:#fff;border:1px solid #cfd5e4;border-radius:3px"></div><span class="t" style="left:127px;top:162px;font-size:11px;color:#000;letter-spacing:-0.3px">32x32 - RGB/A</span><svg style="left:238px;top:166px" width="11" height="7" viewBox="0 0 11 7" ><path d="M1,1 L5.5,5.5 L10,1" fill="none" stroke="#555" stroke-width="1.1"/></svg><svg style="left:261px;top:162px" width="19" height="17" viewBox="0 0 19 17" ><defs><linearGradient id="gpic" x1="0" y1="0" x2="0" y2="1"><stop offset="0" stop-color="#e4eafb"/><stop offset=".55" stop-color="#b4c8f4"/><stop offset="1" stop-color="#3f6edc"/></linearGradient></defs><rect x=".5" y=".5" width="15" height="12" fill="#fdfdfd" stroke="#8e8e8e"/><rect x="2.500" y="2.500" width="11" height="8" fill="url(#gpic)" stroke="#8e8e8e"/><use href="#plus" x="7" y="5" width="10.500" height="10.500"/></svg><svg style="left:284px;top:161px" width="20" height="18" viewBox="0 0 20 18" ><defs><linearGradient id="gpic" x1="0" y1="0" x2="0" y2="1"><stop offset="0" stop-color="#e4eafb"/><stop offset="1" stop-color="#3f6edc"/></linearGradient></defs><rect x="5.5" y="0.5" width="12" height="9" fill="#fdfdfd" stroke="#8e8e8e"/><rect x="7.5" y="2.5" width="8" height="5" fill="url(#gpic)" stroke="#8e8e8e" stroke-width=".8"/><rect x="2.5" y="4.5" width="11" height="9" fill="#fdfdfd" stroke="#8e8e8e"/><rect x="4.5" y="6.5" width="7" height="5" fill="url(#gpic)" stroke="#8e8e8e" stroke-width=".8"/><rect x="0.5" y="8.5" width="9" height="8" fill="#fdfdfd" stroke="#8e8e8e"/><rect x="2.5" y="10.5" width="5" height="4" fill="url(#gpic)" stroke="#8e8e8e" stroke-width=".8"/><use href="#plus" x="9" y="7" width="10.500" height="10.500"/></svg><svg style="left:309px;top:162px" width="19" height="17" viewBox="0 0 19 17" ><defs><linearGradient id="gpic" x1="0" y1="0" x2="0" y2="1"><stop offset="0" stop-color="#e4eafb"/><stop offset=".55" stop-color="#b4c8f4"/><stop offset="1" stop-color="#3f6edc"/></linearGradient></defs><rect x=".5" y=".5" width="15" height="12" fill="#fdfdfd" stroke="#8e8e8e"/><rect x="2.500" y="2.500" width="11" height="8" fill="url(#gpic)" stroke="#8e8e8e"/><use href="#xred" x="6.500" y="4.500" width="11" height="11"/></svg><div style="left:338px;top:158px;width:23px;height:23px;border:1px solid #9ea7c8;border-radius:3px;background:linear-gradient(#e2e8f9 0,#dde4f7 10px,#b9c6ef 11px,#c0ccf2 100%)"></div><svg style="left:341px;top:160px" width="16" height="16" viewBox="0 0 16 16" ><circle cx="7" cy="7" r="5.2" fill="none" stroke="#1e8cf4" stroke-width="2"/><circle cx="7" cy="7" r="1.8" fill="#3a9cf8"/><rect x="6.5" y="7" width="1.6" height="8" fill="#c070d8"/></svg><div class="tb" style="left:362px;top:158px;width:23px;height:23px"></div><div class="tb" style="left:394px;top:158px;width:23px;height:23px"></div><div class="tb" style="left:418px;top:158px;width:23px;height:23px"></div><div class="tb" style="left:442px;top:158px;width:23px;height:23px"></div><div class="tb" style="left:466px;top:158px;width:23px;height:23px"></div><div class="tb" style="left:738px;top:158px;width:23px;height:23px"></div><svg style="left:367px;top:163px" width="15" height="14" viewBox="0 0 15 14" ><circle cx="7.5" cy="7" r="5.3" fill="#b9c0cf" stroke="#2a96f6" stroke-width="2.5"/><circle cx="7.5" cy="7" r="1.8" fill="#2a96f6"/><rect x=".7" y=".7" width="13.6" height="12.6" fill="none" stroke="#000" stroke-width="1.4" stroke-dasharray="3 2.3"/></svg><div style="left:389px;top:160px;width:1px;height:19px;background:#9aa0b8"></div><div style="left:390px;top:160px;width:1px;height:19px;background:#f6f8fc"></div><svg style="left:399px;top:163px" width="15" height="14" viewBox="0 0 16 15" ><rect x=".5" y=".5" width="15" height="14" fill="#fff" stroke="#b0b4c4"/><rect x="0" y="0" width="16" height="3" fill="#6a86ee"/><rect x="0" y="3" width="6" height="12" fill="#f2a48c"/><rect x="5" y="3" width="1.2" height="12" fill="#e85a2a"/><rect x="1.5" y="5" width="2.5" height="2.5" fill="#e83a1a"/><rect x="1.5" y="9" width="2.5" height="2.5" fill="#e83a1a"/><rect x="8" y="5" width="6.5" height="7" fill="#b040e8"/><path d="M10,6.5 V10.5 L13,8.5Z" fill="#fff"/></svg><svg style="left:423px;top:163px" width="13" height="13" viewBox="0 0 15 15" ><rect x=".5" y=".5" width="14" height="14" fill="#e4e6f0" stroke="#808490"/><path d="M5.2,0 V15 M9.8,0 V15 M0,5.2 H15 M0,9.8 H15" stroke="#808490" stroke-width="1.1"/></svg><svg style="left:447px;top:163px" width="16" height="15" viewBox="0 0 16 15" ><rect x=".5" y=".5" width="10.5" height="9" fill="#8e9096" stroke="#6a6c74"/><rect x="4.500" y="4.500" width="10.500" height="9" fill="#e8443a" fill-opacity=".82" stroke="#d83a30"/></svg><svg style="left:469px;top:161px" width="18" height="18" viewBox="0 0 18 18" ><circle cx="8.5" cy="9" r="7.5" fill="#7f869a"/><path d="M1,14 L16,1" stroke="#c5c9dc" stroke-width="1.6"/><path d="M3,16 L17,3.5" stroke="#c5c9dc" stroke-width="1"/></svg><svg style="left:493px;top:160px" width="18" height="18" viewBox="0 0 18 18" ><rect x=".5" y=".5" width="11" height="10" fill="#dfe2ec" stroke="#c0c4d2"/><path d="M6,13 H16.5 V6" fill="none" stroke="#b4b9ca" stroke-width="1.2" stroke-dasharray="2 1.3"/></svg><div style="left:517px;top:160px;width:1px;height:19px;background:#9aa0b8"></div><div style="left:518px;top:160px;width:1px;height:19px;background:#f6f8fc"></div><svg style="left:525px;top:162px" width="16" height="14" viewBox="0 0 16 14" ><path d="M1,3 V12 H9.5 Q7,10 8,8 Q11,7 15,12 Q15,3.5 8,3.5 Q6,3.5 4.5,5 Z" fill="#c3c8d6" stroke="#b3b8c8" stroke-width=".8"/></svg><svg style="left:549px;top:162px" width="16" height="14" viewBox="0 0 16 14" ><g transform="translate(16,0) scale(-1,1)"><path d="M1,3 V12 H9.5 Q7,10 8,8 Q11,7 15,12 Q15,3.5 8,3.5 Q6,3.5 4.5,5 Z" fill="#c3c8d6" stroke="#b3b8c8" stroke-width=".8"/></g></svg><div style="left:573px;top:160px;width:1px;height:19px;background:#9aa0b8"></div><div style="left:574px;top:160px;width:1px;height:19px;background:#f6f8fc"></div><svg style="left:581px;top:160px" width="17" height="17" viewBox="0 0 17 17" ><path d="M2,1 L11,11 M14,1 L5,11" stroke="#bfc3d0" stroke-width="2" stroke-linecap="round"/><circle cx="4" cy="13" r="2.4" fill="none" stroke="#bfc3d0" stroke-width="1.6"/><circle cx="12" cy="13" r="2.4" fill="none" stroke="#bfc3d0" stroke-width="1.6"/></svg><svg style="left:605px;top:160px" width="17" height="17" viewBox="0 0 17 17" ><path d="M.5,.5 H6 L9.5,4 V11.5 H.5 Z" fill="url(#gpage)" stroke="#9a9a9a"/><path d="M6.5,4.5 H12 L15.5,8 V16.5 H6.5 Z" fill="url(#gpage)" stroke="#8a8a8a"/></svg><svg style="left:629px;top:159px" width="17" height="18" viewBox="0 0 17 18" ><rect x=".6" y="2.6" width="11" height="13" rx="1.3" fill="url(#gclip2)" stroke="#9a6a08" stroke-width="1"/><path d="M3.5,3.5 V2 H5 Q5,.5 6,.5 Q7.2,.5 7.2,2 H8.6 V3.5Z" fill="#c8ccd4" stroke="#80848c" stroke-width=".7"/><path d="M7.5,6.5 H12.5 L15.5,9.5 V17.5 H7.5 Z" fill="url(#gpage)" stroke="#8a8a8a"/></svg><div style="left:653px;top:160px;width:1px;height:19px;background:#9aa0b8"></div><div style="left:654px;top:160px;width:1px;height:19px;background:#f6f8fc"></div><svg style="left:661px;top:160px" width="18" height="18" viewBox="0 0 18 18" ><foreignObject x="1" y="1" width="13" height="13"><div style="position:static;width:13px;height:13px;background:conic-gradient(from 0deg,#38e838,#f4f020 45deg,#f43020 110deg,#e420e0 180deg,#2838f0 250deg,#20e0f0 315deg,#38e838)"></div></foreignObject><rect x=".5" y=".5" width="14" height="14" fill="none" stroke="#4a4a8a"/><path d="M17,13 V17 H13Z" fill="#3a3a78"/></svg><div style="left:685px;top:160px;width:1px;height:19px;background:#9aa0b8"></div><div style="left:686px;top:160px;width:1px;height:19px;background:#f6f8fc"></div><svg style="left:693px;top:160px" width="17" height="17" viewBox="0 0 17 17" ><path d="M9,9 L14.5,14.5" stroke="#d89a18" stroke-width="3.4" stroke-linecap="round"/><path d="M9,9 L11,11" stroke="#8a8e98" stroke-width="2.4"/><circle cx="6.5" cy="6.5" r="5.4" fill="#e6ebf4" stroke="#8a90a0" stroke-width="1.5"/><path d="M3.5,6.5 H9.5 M6.5,3.5 V9.5" stroke="#2a62e0" stroke-width="2"/></svg><svg style="left:717px;top:160px" width="17" height="17" viewBox="0 0 17 17" ><path d="M9,9 L14.5,14.5" stroke="#d89a18" stroke-width="3.4" stroke-linecap="round"/><path d="M9,9 L11,11" stroke="#8a8e98" stroke-width="2.4"/><circle cx="6.5" cy="6.5" r="5.4" fill="#e6ebf4" stroke="#8a90a0" stroke-width="1.5"/><path d="M3.5,6.5 H9.5" stroke="#2a62e0" stroke-width="2"/></svg><svg style="left:741px;top:159px" width="19" height="19" viewBox="0 0 19 19" ><path d="M10,11 L15.5,16.5" stroke="#d89a18" stroke-width="3.2" stroke-linecap="round"/><circle cx="7" cy="9.5" r="5.4" fill="#bcd2f4" stroke="#80869a" stroke-width="1.8"/><circle cx="7" cy="9.5" r="3" fill="#8ab4f4"/><path d="M8,1 L17,11" stroke="#2a2a2a" stroke-width="2.6"/><path d="M8.6,.5 L17.6,10.5" stroke="#f0f0f0" stroke-width=".9"/></svg><div style="left:765px;top:160px;width:1px;height:19px;background:#9aa0b8"></div><div style="left:766px;top:160px;width:1px;height:19px;background:#f6f8fc"></div><svg style="left:773px;top:160px" width="17" height="17" viewBox="0 0 17 17" ><path d="M2.5,.5 H11 L14.5,4 V16.5 H2.5 Z" fill="url(#gpage)" stroke="#9a9a9a"/><path d="M4.5,8.5 L6,7.5 L7.8,10.5 Q9.5,7 13,5 L13.4,6 Q10.5,9 8.8,14 L7.4,14 Q6.4,11 4.5,8.5Z" fill="#e4503a"/></svg>
<div style="left:11px;top:185px;width:114px;height:814px;background:#fff"></div>
<div style="left:125px;top:185px;width:1px;height:814px;background:#9db7dc"></div>
<svg style="left:51px;top:192.6px" width="26" height="35" viewBox="0 0 26 35" ><use href="#arw" width="26" height="35"/></svg><span class="t" style="left:13px;top:239px;font-size:10px;color:#000;width:110px;text-align:center;line-height:14px;letter-spacing:-0.35px">256x256 - RGB/A</span><div style="left:13px;top:256px;width:110px;height:1px;background:#b4b4b4"></div><svg style="left:51px;top:264.6px" width="26" height="35" viewBox="0 0 26 35" ><use href="#arw" width="26" height="35"/></svg><span class="t" style="left:13px;top:311px;font-size:10px;color:#000;width:110px;text-align:center;line-height:14px;letter-spacing:-0.35px">128x128 - RGB/A</span><div style="left:13px;top:328px;width:110px;height:1px;background:#b4b4b4"></div><svg style="left:51px;top:336.6px" width="26" height="35" viewBox="0 0 26 35" ><use href="#arw" width="26" height="35"/></svg><span class="t" style="left:13px;top:383px;font-size:10px;color:#000;width:110px;text-align:center;line-height:14px;letter-spacing:-0.35px">96x96 - RGB/A</span><div style="left:13px;top:400px;width:110px;height:1px;background:#b4b4b4"></div><svg style="left:51px;top:408.6px" width="26" height="35" viewBox="0 0 26 35" ><use href="#arw" width="26" height="35"/></svg><span class="t" style="left:13px;top:455px;font-size:10px;color:#000;width:110px;text-align:center;line-height:14px;letter-spacing:-0.35px">72x72 - RGB/A</span><div style="left:13px;top:472px;width:110px;height:1px;background:#b4b4b4"></div><svg style="left:51px;top:480.6px" width="26" height="35" viewBox="0 0 26 35" ><use href="#arw" width="26" height="35"/></svg><span class="t" style="left:13px;top:527px;font-size:10px;color:#000;width:110px;text-align:center;line-height:14px;letter-spacing:-0.35px">64x64 - RGB/A</span><div style="left:13px;top:544px;width:110px;height:1px;background:#b4b4b4"></div><svg style="left:51px;top:552.6px" width="26" height="35" viewBox="0 0 26 35" ><use href="#arw" width="26" height="35"/></svg><span class="t" style="left:13px;top:599px;font-size:10px;color:#000;width:110px;text-align:center;line-height:14px;letter-spacing:-0.35px">48x48 - RGB/A</span><div style="left:13px;top:616px;width:110px;height:1px;background:#b4b4b4"></div><div style="left:15px;top:620px;width:106px;height:68px;border:2px solid #e8141c;background:linear-gradient(#f6f6f6,#ececec 60%,#e6e6e6)"></div><svg style="left:57px;top:632px" width="17" height="22" viewBox="0 0 17 22" ><use href="#arw" width="17" height="22"/></svg><span class="t" style="left:13px;top:671px;font-size:10px;color:#000;width:110px;text-align:center;line-height:14px;letter-spacing:-0.35px">32x32 - RGB/A</span><div style="left:13px;top:689px;width:110px;height:1px;background:#e0e0e0"></div>
<div style="left:126px;top:185px;width:1633px;height:814px;background:#e1e1e1;box-shadow:inset 0 0 0 1px #fff, inset 0 0 4px 2px #fafafa"></div>
<svg style="left:553px;top:203px" width="779" height="779" shape-rendering="crispEdges"><defs><pattern id="chk" x="5" y="5" width="8" height="8" patternUnits="userSpaceOnUse"><rect width="8" height="8" fill="#fff"/><rect width="4" height="4" fill="#ececec"/><rect x="4" y="4" width="4" height="4" fill="#ececec"/></pattern></defs><rect x="0" y="0" width="779" height="779" fill="#b4b4b4"/><rect x="1" y="1" width="777" height="777" fill="#8e8e8e"/><rect x="2" y="2" width="776" height="776" fill="#fff"/><rect x="5" y="5" width="768" height="768" fill="url(#chk)"/><rect x="149" y="77" width="24" height="24" fill="rgba(0,0,0,0.28)"/><rect x="173" y="77" width="24" height="24" fill="rgba(0,0,0,0.6)"/><rect x="197" y="77" width="24" height="24" fill="rgba(0,0,0,0.5)"/><rect x="221" y="77" width="24" height="24" fill="rgba(0,0,0,0.07)"/><rect x="125" y="101" width="24" height="24" fill="rgba(0,0,0,0.33)"/><rect x="149" y="101" width="24" height="24" fill="#1e1e1e"/><rect x="173" y="101" width="24" height="24" fill="#8c8c8c"/><rect x="197" y="101" width="24" height="24" fill="#585858"/><rect x="221" y="101" width="24" height="24" fill="#2e2e2e"/><rect x="245" y="101" width="24" height="24" fill="rgba(0,0,0,0.11)"/><rect x="125" y="125" width="24" height="24" fill="rgba(0,0,0,0.73)"/><rect x="149" y="125" width="24" height="24" fill="#a8a8a8"/><rect x="173" y="125" width="48" height="24" fill="#ffffff"/><rect x="221" y="125" width="24" height="24" fill="#888888"/><rect x="245" y="125" width="24" height="24" fill="#222222"/><rect x="269" y="125" width="24" height="24" fill="rgba(0,0,0,0.15)"/><rect x="125" y="149" width="24" height="24" fill="rgba(0,0,0,0.76)"/><rect x="149" y="149" width="24" height="24" fill="#c0c0c0"/><rect x="173" y="149" width="72" height="24" fill="#ffffff"/><rect x="245" y="149" width="24" height="24" fill="#999999"/><rect x="269" y="149" width="24" height="24" fill="#1c1c1c"/><rect x="293" y="149" width="24" height="24" fill="rgba(0,0,0,0.21)"/><rect x="125" y="173" width="24" height="24" fill="rgba(0,0,0,0.76)"/><rect x="149" y="173" width="24" height="24" fill="#c0c0c0"/><rect x="173" y="173" width="96" height="24" fill="#ffffff"/><rect x="269" y="173" width="24" height="24" fill="#aaaaaa"/><rect x="293" y="173" width="24" height="24" fill="#141414"/><rect x="317" y="173" width="24" height="24" fill="rgba(0,0,0,0.31)"/><rect x="125" y="197" width="24" height="24" fill="rgba(0,0,0,0.76)"/><rect x="149" y="197" width="24" height="24" fill="#c0c0c0"/><rect x="173" y="197" width="120" height="24" fill="#ffffff"/><rect x="293" y="197" width="24" height="24" fill="#bbbbbb"/><rect x="317" y="197" width="24" height="24" fill="#181818"/><rect x="341" y="197" width="24" height="24" fill="rgba(0,0,0,0.39)"/><rect x="125" y="221" width="24" height="24" fill="rgba(0,0,0,0.76)"/><rect x="149" y="221" width="24" height="24" fill="#c0c0c0"/><rect x="173" y="221" width="144" height="24" fill="#ffffff"/><rect x="317" y="221" width="24" height="24" fill="#cccccc"/><rect x="341" y="221" width="24" height="24" fill="#1e1e1e"/><rect x="365" y="221" width="24" height="24" fill="rgba(0,0,0,0.46)"/><rect x="125" y="245" width="24" height="24" fill="rgba(0,0,0,0.76)"/><rect x="149" y="245" width="24" height="24" fill="#c0c0c0"/><rect x="173" y="245" width="168" height="24" fill="#ffffff"/><rect x="341" y="245" width="24" height="24" fill="#dcdcdc"/><rect x="365" y="245" width="24" height="24" fill="#262626"/><rect x="389" y="245" width="24" height="24" fill="rgba(0,0,0,0.54)"/><rect x="125" y="269" width="24" height="24" fill="rgba(0,0,0,0.76)"/><rect x="149" y="269" width="24" height="24" fill="#c0c0c0"/><rect x="173" y="269" width="192" height="24" fill="#ffffff"/><rect x="365" y="269" width="24" height="24" fill="#e8e8e8"/><rect x="389" y="269" width="24" height="24" fill="#383838"/><rect x="413" y="269" width="24" height="24" fill="rgba(0,0,0,0.62)"/><rect x="125" y="293" width="24" height="24" fill="rgba(0,0,0,0.76)"/><rect x="149" y="293" width="24" height="24" fill="#c0c0c0"/><rect x="173" y="293" width="168" height="24" fill="#ffffff"/><rect x="341" y="293" width="24" height="24" fill="#f4fdfc"/><rect x="365" y="293" width="24" height="24" fill="#b8f5ea"/><rect x="389" y="293" width="24" height="24" fill="#70e0d0"/><rect x="413" y="293" width="24" height="24" fill="#1c3c38"/><rect x="437" y="293" width="24" height="24" fill="rgba(0,0,0,0.69)"/><rect x="461" y="293" width="24" height="24" fill="rgba(0,0,0,0.06)"/><rect x="125" y="317" width="24" height="24" fill="rgba(0,0,0,0.76)"/><rect x="149" y="317" width="24" height="24" fill="#c0c0c0"/><rect x="173" y="317" width="120" height="24" fill="#ffffff"/><rect x="293" y="317" width="24" height="24" fill="#fafdfd"/><rect x="317" y="317" width="24" height="24" fill="#b8f5ea"/><rect x="341" y="317" width="24" height="24" fill="#70ecdc"/><rect x="365" y="317" width="48" height="24" fill="#6eecdc"/><rect x="413" y="317" width="24" height="24" fill="#70e6d6"/><rect x="437" y="317" width="24" height="24" fill="#245450"/><rect x="461" y="317" width="24" height="24" fill="#3c3c3c"/><rect x="485" y="317" width="24" height="24" fill="rgba(0,0,0,0.07)"/><rect x="125" y="341" width="24" height="24" fill="rgba(0,0,0,0.76)"/><rect x="149" y="341" width="24" height="24" fill="#c0c0c0"/><rect x="173" y="341" width="96" height="24" fill="#ffffff"/><rect x="269" y="341" width="24" height="24" fill="#e8fcfa"/><rect x="293" y="341" width="24" height="24" fill="#88eede"/><rect x="317" y="341" width="144" height="24" fill="#6eecdc"/><rect x="461" y="341" width="24" height="24" fill="#2e6860"/><rect x="485" y="341" width="24" height="24" fill="#343434"/><rect x="125" y="365" width="24" height="24" fill="rgba(0,0,0,0.76)"/><rect x="149" y="365" width="24" height="24" fill="#c0c0c0"/><rect x="173" y="365" width="72" height="24" fill="#ffffff"/><rect x="245" y="365" width="24" height="24" fill="#d8faf4"/><rect x="269" y="365" width="24" height="24" fill="#74ecdc"/><rect x="293" y="365" width="192" height="24" fill="#6eecdc"/><rect x="485" y="365" width="24" height="24" fill="#122622"/><rect x="509" y="365" width="24" height="24" fill="rgba(0,0,0,0.23)"/><rect x="125" y="389" width="24" height="24" fill="rgba(0,0,0,0.76)"/><rect x="149" y="389" width="24" height="24" fill="#c0c0c0"/><rect x="173" y="389" width="48" height="24" fill="#ffffff"/><rect x="221" y="389" width="24" height="24" fill="#d0f8f4"/><rect x="245" y="389" width="24" height="24" fill="#72ecdc"/><rect x="269" y="389" width="192" height="24" fill="#6eecdc"/><rect x="461" y="389" width="24" height="24" fill="#6ee4d4"/><rect x="485" y="389" width="24" height="24" fill="#0c1c1a"/><rect x="509" y="389" width="24" height="24" fill="rgba(0,0,0,0.2)"/><rect x="125" y="413" width="24" height="24" fill="rgba(0,0,0,0.76)"/><rect x="149" y="413" width="24" height="24" fill="#c0c0c0"/><rect x="173" y="413" width="24" height="24" fill="#ffffff"/><rect x="197" y="413" width="24" height="24" fill="#d0f6f4"/><rect x="221" y="413" width="24" height="24" fill="#72ecdc"/><rect x="245" y="413" width="120" height="24" fill="#6eecdc"/><rect x="365" y="413" width="24" height="24" fill="#5cc4b6"/><rect x="389" y="413" width="24" height="24" fill="#3c867c"/><rect x="413" y="413" width="24" height="24" fill="#2c665e"/><rect x="437" y="413" width="24" height="24" fill="#265850"/><rect x="461" y="413" width="24" height="24" fill="#122a28"/><rect x="485" y="413" width="24" height="24" fill="rgba(0,0,0,0.65)"/><rect x="125" y="437" width="24" height="24" fill="rgba(0,0,0,0.76)"/><rect x="149" y="437" width="24" height="24" fill="#c0c0c0"/><rect x="173" y="437" width="24" height="24" fill="#e4fcf8"/><rect x="197" y="437" width="24" height="24" fill="#70ecdc"/><rect x="221" y="437" width="72" height="24" fill="#6eecdc"/><rect x="293" y="437" width="24" height="24" fill="#6ee8d8"/><rect x="317" y="437" width="24" height="24" fill="#3c867c"/><rect x="341" y="437" width="24" height="24" fill="#122624"/><rect x="365" y="437" width="24" height="24" fill="#222222"/><rect x="389" y="437" width="24" height="24" fill="rgba(0,0,0,0.64)"/><rect x="413" y="437" width="24" height="24" fill="rgba(0,0,0,0.47)"/><rect x="437" y="437" width="24" height="24" fill="rgba(0,0,0,0.43)"/><rect x="461" y="437" width="24" height="24" fill="rgba(0,0,0,0.29)"/><rect x="125" y="461" width="24" height="24" fill="rgba(0,0,0,0.76)"/><rect x="149" y="461" width="24" height="24" fill="#babcbc"/><rect x="173" y="461" width="24" height="24" fill="#84eedf"/><rect x="197" y="461" width="72" height="24" fill="#6eecdc"/><rect x="269" y="461" width="24" height="24" fill="#5cc4b6"/><rect x="293" y="461" width="24" height="24" fill="#142c28"/><rect x="317" y="461" width="24" height="24" fill="rgba(0,0,0,0.7)"/><rect x="341" y="461" width="24" height="24" fill="rgba(0,0,0,0.29)"/><rect x="125" y="485" width="24" height="24" fill="rgba(0,0,0,0.76)"/><rect x="149" y="485" width="24" height="24" fill="#70b8ac"/><rect x="173" y="485" width="72" height="24" fill="#6eecdc"/><rect x="245" y="485" width="24" height="24" fill="#4caea0"/><rect x="269" y="485" width="24" height="24" fill="#121a1a"/><rect x="293" y="485" width="24" height="24" fill="rgba(0,0,0,0.4)"/><rect x="125" y="509" width="24" height="24" fill="rgba(0,0,0,0.75)"/><rect x="149" y="509" width="24" height="24" fill="#4eb0a2"/><rect x="173" y="509" width="48" height="24" fill="#6eecdc"/><rect x="221" y="509" width="24" height="24" fill="#50b4a6"/><rect x="245" y="509" width="24" height="24" fill="#121a18"/><rect x="269" y="509" width="24" height="24" fill="rgba(0,0,0,0.29)"/><rect x="125" y="533" width="24" height="24" fill="rgba(0,0,0,0.65)"/><rect x="149" y="533" width="24" height="24" fill="#3a867a"/><rect x="173" y="533" width="24" height="24" fill="#6eecdc"/><rect x="197" y="533" width="24" height="24" fill="#66dccc"/><rect x="221" y="533" width="24" height="24" fill="#10221e"/><rect x="245" y="533" width="24" height="24" fill="rgba(0,0,0,0.36)"/><rect x="125" y="557" width="24" height="24" fill="rgba(0,0,0,0.21)"/><rect x="149" y="557" width="24" height="24" fill="#101616"/><rect x="173" y="557" width="24" height="24" fill="#225650"/><rect x="197" y="557" width="24" height="24" fill="#122a26"/><rect x="221" y="557" width="24" height="24" fill="rgba(0,0,0,0.62)"/><rect x="149" y="581" width="24" height="24" fill="rgba(0,0,0,0.12)"/><rect x="173" y="581" width="24" height="24" fill="rgba(0,0,0,0.37)"/><rect x="197" y="581" width="24" height="24" fill="rgba(0,0,0,0.29)"/><path d="M29.5 5V774M5 29.5H774M53.5 5V774M5 53.5H774M77.5 5V774M5 77.5H774M101.5 5V774M5 101.5H774M125.5 5V774M5 125.5H774M149.5 5V774M5 149.5H774M173.5 5V774M5 173.5H774M221.5 5V774M5 221.5H774M245.5 5V774M5 245.5H774M269.5 5V774M5 269.5H774M293.5 5V774M5 293.5H774M317.5 5V774M5 317.5H774M341.5 5V774M5 341.5H774M365.5 5V774M5 365.5H774M413.5 5V774M5 413.5H774M437.5 5V774M5 437.5H774M461.5 5V774M5 461.5H774M485.5 5V774M5 485.5H774M509.5 5V774M5 509.5H774M533.5 5V774M5 533.5H774M557.5 5V774M5 557.5H774M605.5 5V774M5 605.5H774M629.5 5V774M5 629.5H774M653.5 5V774M5 653.5H774M677.5 5V774M5 677.5H774M701.5 5V774M5 701.5H774M725.5 5V774M5 725.5H774M749.5 5V774M5 749.5H774" stroke="#808080" stroke-opacity=".22" stroke-width="1" fill="none"/><path d="M29.5 5V774M5 29.5H774M53.5 5V774M5 53.5H774M77.5 5V774M5 77.5H774M101.5 5V774M5 101.5H774M125.5 5V774M5 125.5H774M149.5 5V774M5 149.5H774M173.5 5V774M5 173.5H774M221.5 5V774M5 221.5H774M245.5 5V774M5 245.5H774M269.5 5V774M5 269.5H774M293.5 5V774M5 293.5H774M317.5 5V774M5 317.5H774M341.5 5V774M5 341.5H774M365.5 5V774M5 365.5H774M413.5 5V774M5 413.5H774M437.5 5V774M5 437.5H774M461.5 5V774M5 461.5H774M485.5 5V774M5 485.5H774M509.5 5V774M5 509.5H774M533.5 5V774M5 533.5H774M557.5 5V774M5 557.5H774M605.5 5V774M5 605.5H774M629.5 5V774M5 629.5H774M653.5 5V774M5 653.5H774M677.5 5V774M5 677.5H774M701.5 5V774M5 701.5H774M725.5 5V774M5 725.5H774M749.5 5V774M5 749.5H774" stroke="#787878" stroke-width="1" stroke-dasharray="1 1" fill="none"/><path d="M5.5 5V774M5 5.5H774M197.5 5V774M5 197.5H774M389.5 5V774M5 389.5H774M581.5 5V774M5 581.5H774M773.5 5V774M5 773.5H774" stroke="#0c0c0c" stroke-width="1" stroke-dasharray="1 1" fill="none"/><rect x="6" y="6" width="23" height="23" fill="none" stroke="#333" stroke-width="2"/></svg>
<div style="left:550px;top:198px;width:39px;height:42px;border:2px solid #e8121d"></div>
<div style="left:353px;top:192.5px;width:106px;height:21px;background:rgba(70,70,70,.7);border-radius:3px;filter:blur(.8px)"></div>
<div style="left:351px;top:190px;width:106px;height:21px;background:#fbfbfb;border-radius:3px"></div>
<span class="t" style="left:356.5px;top:192px;font-size:12px;color:#575757;letter-spacing:0.44px">Set Hot Spot (K)</span>
<div style="left:333px;top:151px;width:134px;height:66px;border:2px solid #a23fa2"></div>
<svg style="left:348px;top:166px" width="15" height="24" viewBox="0 0 15 24" ><path d="M.7,.8 V18.6 L4.8,14.8 L8,22.2 L10.8,21 L7.7,13.8 H13.4 Z" fill="#fff" stroke="#000" stroke-width="1.1" stroke-linejoin="miter"/></svg>
<div style="left:0px;top:1010px;width:1920px;height:18px;background:#f2f5fc"></div>
<div style="left:0px;top:1008px;width:1768px;height:1px;background:#e2e2e2"></div>
<span class="t" style="left:3px;top:1013px;font-size:12px;color:#000;letter-spacing:-0.03px">Specifies the Hot Spot location of the cursor image</span>
<span class="t" style="left:1191px;top:1013px;font-size:12px;color:#000;letter-spacing:0.23px">Arrow</span>
<span class="t" style="left:1396px;top:1013px;font-size:12px;color:#000;letter-spacing:-0.34px">7 Formats: 405 Kb</span>
<span class="t" style="left:1524px;top:1013px;font-size:12px;color:#000;letter-spacing:-0.35px">32x32 - RGB/A (4 Kb)</span>
<span class="t" style="left:1815px;top:1013px;font-size:12px;color:#000;letter-spacing:-0.56px">0,0</span>
<span class="t" style="left:1863px;top:1013px;font-size:12px;color:#000;letter-spacing:-0.73px">2400%</span>
<div style="left:1391px;top:1011px;width:1px;height:17px;background:#c9cdd9"></div>
<div style="left:1519px;top:1011px;width:1px;height:17px;background:#c9cdd9"></div>
<div style="left:1657px;top:1011px;width:1px;height:17px;background:#c9cdd9"></div>
<div style="left:1725px;top:1011px;width:1px;height:17px;background:#c9cdd9"></div>
<div style="left:1793px;top:1011px;width:1px;height:17px;background:#c9cdd9"></div>
<div style="left:1841px;top:1011px;width:1px;height:17px;background:#c9cdd9"></div>
<div style="left:1900px;top:1011px;width:1px;height:17px;background:#c9cdd9"></div>
<svg style="left:1661px;top:1012px" width="16" height="16" viewBox="0 0 16 16" ><rect x="5.500" y="6.500" width="9" height="8" fill="#c4c4c4" stroke="#222" stroke-dasharray="1 1"/><path d="M5.500,.5 V8 M.5,4.500 H13" stroke="#e02020" stroke-width="1.100" stroke-dasharray="2.500 1"/></svg><svg style="left:1729px;top:1012px" width="17" height="16" viewBox="0 0 17 16" ><rect x="6.5" y="5.5" width="8" height="8" fill="#c8c8c8" stroke="#333" stroke-dasharray="1 1"/><path d="M8,2 H15 M15,0 V4 M2,7 V14 M0,14 H4" stroke="#e02020" stroke-width="1.2"/><path d="M13,0 L15,2 L13,4Z M0,12 L2,14 L4,12Z" fill="#e02020"/></svg><svg style="left:1797px;top:1012.5px" width="14" height="16" viewBox="0 0 14 16" ><circle cx="5.5" cy="5.5" r="4" fill="none" stroke="#2a8af0" stroke-width="1.8"/><circle cx="5.5" cy="5.5" r="1.2" fill="#2a8af0"/><path d="M5,5 V14 L7.2,12 L8.8,15.5 L10.4,14.8 L8.8,11.4 H12 Z" fill="#c8a0e0" stroke="#6a4a8a" stroke-width=".7"/></svg><svg style="left:1846px;top:1012px" width="15" height="15" viewBox="0 0 15 15" ><path d="M8,8 L13,13" stroke="#d89a18" stroke-width="2.8" stroke-linecap="round"/><circle cx="5.5" cy="5.5" r="4.4" fill="#d8ecfa" stroke="#8aa8c8" stroke-width="1.4"/></svg><svg style="left:1904px;top:1011px" width="16" height="16" viewBox="0 0 16 16" ><use href="#floppyb" x="1" y="2" width="14" height="14"/><path d="M0,1 H6 M6,1 L3.5,-1 M6,1 L3.5,3.5" stroke="#e02020" stroke-width="1.6" fill="none"/></svg>
</body></html>
